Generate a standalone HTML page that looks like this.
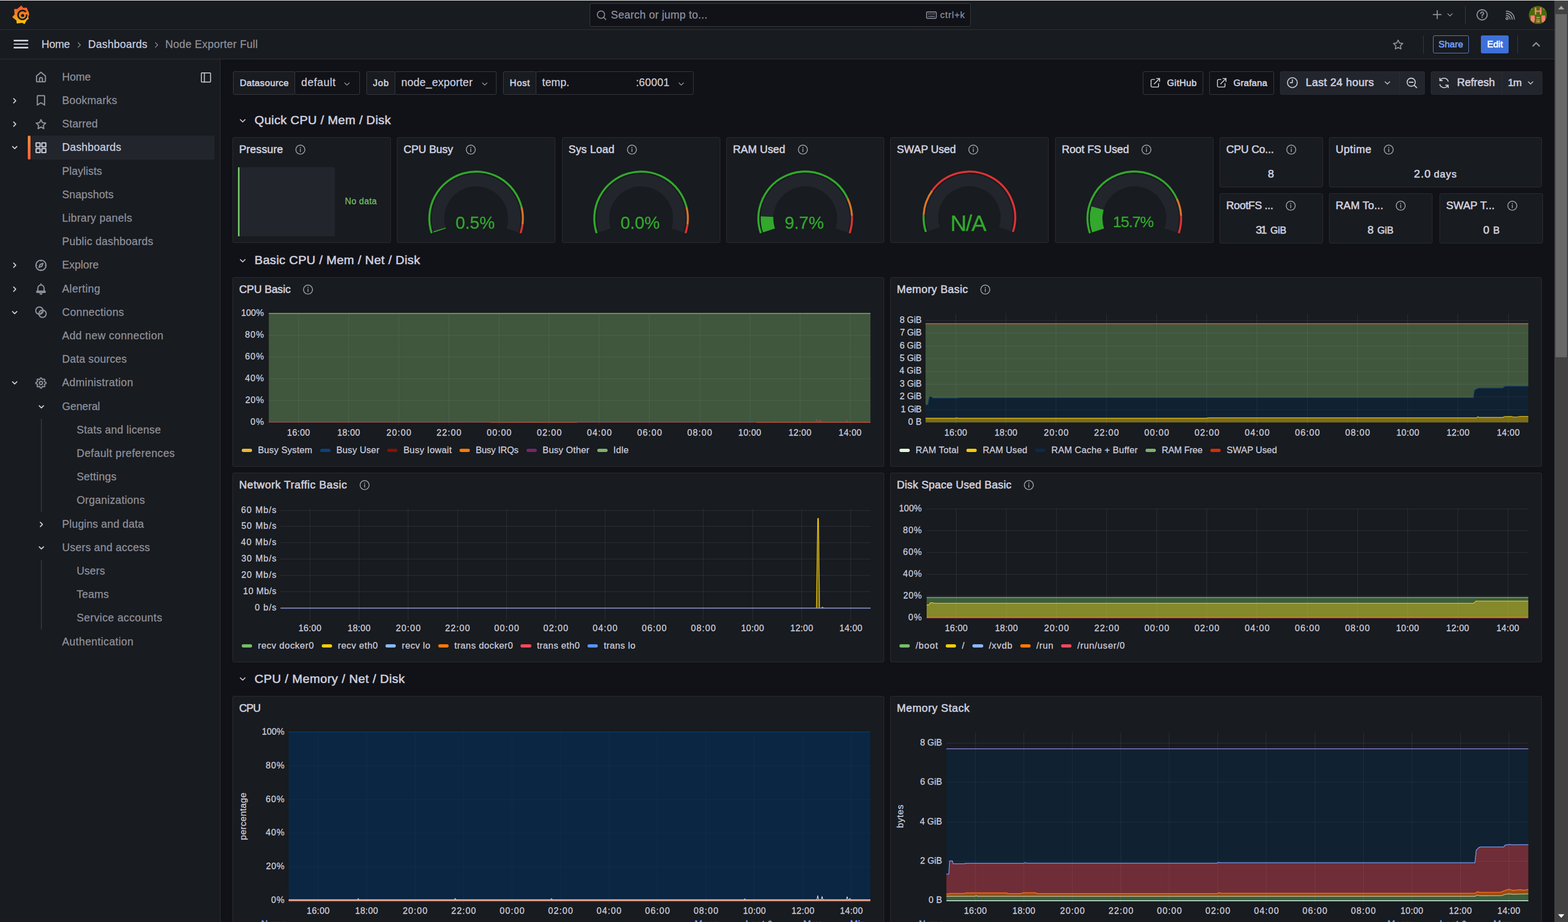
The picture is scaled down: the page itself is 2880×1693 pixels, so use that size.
<!DOCTYPE html>
<html lang="en"><head><meta charset="utf-8"><title>Node Exporter Full - Dashboards - Grafana</title><style>
html,body{margin:0;padding:0;background:#111217;}
body{width:2880px;height:1693px;overflow:hidden;font-family:"Liberation Sans", sans-serif;}
#root{position:relative;width:2880px;height:1693px;overflow:hidden;background:#111217;}
.t{position:absolute;white-space:pre;font-family:"Liberation Sans", sans-serif;}
.r{position:absolute;display:block;box-sizing:border-box;}
</style></head><body><div id="root">
<div class="r" style="left:0px;top:0px;width:2880px;height:55px;background:#181b1f;"></div><div class="r" style="left:0px;top:54px;width:2880px;height:1px;background:#2e3036;"></div><div class="r" style="left:0px;top:55px;width:2880px;height:54px;background:#181b1f;"></div><div class="r" style="left:0px;top:108px;width:2880px;height:1px;background:#2e3036;"></div><div class="r" style="left:0px;top:0px;width:2880px;height:1px;background:#f4f4f4;"></div><svg class="r" style="left:0px;top:0px;" width="70" height="55" viewBox="0 0 70 55"><defs><linearGradient id="lg" x1="0" y1="0" x2="0" y2="1"><stop offset="0" stop-color="#f05a28"/><stop offset=".5" stop-color="#f58220"/><stop offset="1" stop-color="#fbca0a"/></linearGradient></defs><path d="M39.2 11L42.3 15.4L48.6 14.9L50.2 19L52.4 23.6L52.5 27.4L51 30.4L51.9 34.4L48.6 36.4L44.8 43.2L41.2 41L31.4 42.2L31 37.2L23.6 31.3L27.6 26.8L26.8 17.2L32 17Z" fill="url(#lg)" stroke="url(#lg)" stroke-width="1.6" stroke-linejoin="round"/><path d="M47.62 22.01L46.89 21.32L46.08 20.72L45.22 20.22L44.3 19.83L43.34 19.54L42.36 19.38L41.37 19.33L40.38 19.4L39.41 19.59L38.47 19.88L37.57 20.29L36.73 20.8L35.96 21.4L35.27 22.09L34.66 22.85L34.15 23.68L33.74 24.56L33.44 25.48L33.26 26.43L33.18 27.39L33.22 28.35L33.37 29.3L33.64 30.22L34 31.1L34.47 31.93L35.04 32.7L35.68 33.39L36.41 34L37.2 34.52L38.04 34.94L38.92 35.25L39.84 35.46L40.77 35.56L41.7 35.55L42.62 35.43L43.52 35.2L44.39 34.87L45.2 34.44L45.96 33.91L46.65 33.31L47.26 32.62L47.79 31.87L48.22 31.07L48.55 30.22L48.78 29.34L48.9 28.44L48.92 27.54L48.83 26.64" fill="none" stroke="#181b1f" stroke-width="3.0" stroke-linecap="butt" stroke-linejoin="round"/><circle cx="41.5" cy="28.9" r="3.1" fill="#181b1f"/><path d="M39.6 30.2 A2.6 2.6 0 0 0 43.6 31" fill="none" stroke="#f7a55a" stroke-width="1"/></svg><div class="r" style="left:1083px;top:6px;width:700px;height:43px;background:#111217;border:1px solid #393b42;border-radius:3px;box-sizing:border-box;"></div><svg class="r" style="left:1094.45px;top:17.05px;" width="21.5" height="21.5" viewBox="0 0 24 24"><g fill="none" stroke="#8e8f9b" stroke-width="1.9" stroke-linecap="round" stroke-linejoin="round"><circle cx="11" cy="11" r="7.5"/><path d="M16.5 16.5L21 21"/></g></svg><span class="t" style="left:1122px;top:15px;font-size:19.75px;line-height:24px;color:#8e8f9b;letter-spacing:0.26px;-webkit-text-stroke:0.3px #8e8f9b;">Search or jump to...</span><svg class="r" style="left:1700.25px;top:16.95px;" width="21.5" height="21.5" viewBox="0 0 24 24"><g fill="none" stroke="#8e8f9b" stroke-width="1.8" stroke-linecap="round" stroke-linejoin="round"><rect x="2" y="5.5" width="20" height="13" rx="1.8"/><path d="M5.5 9.5h1M9 9.5h1M12.5 9.5h1M16 9.5h2.5M5.5 14.5h1M9 14.5h6.5M17.5 14.5h1" stroke-width="1.9"/></g></svg><span class="t" style="left:1726.8px;top:18px;font-size:16.75px;line-height:20px;color:#8e8f9b;letter-spacing:0.94px;-webkit-text-stroke:0.3px #8e8f9b;">ctrl+k</span><svg class="r" style="left:2629.25px;top:16.35px;" width="21.5" height="21.5" viewBox="0 0 24 24"><g fill="none" stroke="#8e8f9b" stroke-width="2.3" stroke-linecap="round" stroke-linejoin="round"><path d="M12 4v16M4 12h16"/></g></svg><svg class="r" style="left:2654.55px;top:19.15px;" width="16.5" height="16.5" viewBox="0 0 24 24"><g fill="none" stroke="#8e8f9b" stroke-width="2.3" stroke-linecap="round" stroke-linejoin="round"><path d="M6 9l6 6 6-6"/></g></svg><div class="r" style="left:2691px;top:11px;width:1px;height:33px;background:#393b42;"></div><svg class="r" style="left:2709.75px;top:14.75px;" width="24.5" height="24.5" viewBox="0 0 24 24"><g fill="none" stroke="#8e8f9b" stroke-width="2" stroke-linecap="round" stroke-linejoin="round"><circle cx="12" cy="12" r="9.2"/><path d="M9.6 9.5a2.5 2.5 0 1 1 3.6 2.2c-.8.5-1.2 1-1.2 2"/><path d="M12 16.2v.6"/></g></svg><svg class="r" style="left:2763px;top:17px;" width="22" height="22" viewBox="0 0 24 24"><g fill="none" stroke="#8e8f9b" stroke-width="2" stroke-linecap="round" stroke-linejoin="round"><circle cx="5.5" cy="18.5" r="2"/><path d="M4 12.5a7.5 7.5 0 0 1 7.5 7.5"/><path d="M4 8.2A11.8 11.8 0 0 1 15.8 20"/><path d="M4 3.8A16.2 16.2 0 0 1 20.2 20"/></g></svg><svg class="r" style="left:2807.8px;top:10.8px;" width="33.4" height="33.4" viewBox="0 0 33.4 33.4"><defs><clipPath id="avc"><circle cx="16.7" cy="16.7" r="16.7"/></clipPath></defs><g clip-path="url(#avc)"><rect width="34" height="34" fill="#4a6b0a"/><rect x="10.9" y="2.8" width="2.9" height="13" fill="#fb8072"/><rect x="20.3" y="2.8" width="3" height="13" fill="#fb8072"/><rect x="10.9" y="8.3" width="12.4" height="2.5" fill="#fb8072"/><rect x="3.4" y="17.4" width="7.5" height="10.4" fill="#fb8072"/><rect x="23.3" y="17.4" width="6.8" height="10.4" fill="#fb8072"/><rect x="6.2" y="27.8" width="3.7" height="2.4" fill="#fb8072"/><rect x="24" y="27.8" width="3.7" height="2.4" fill="#fb8072"/><rect x="13.8" y="20.3" width="6.5" height="2.1" fill="#fb8072"/><rect x="13.8" y="24.7" width="6.5" height="2" fill="#fb8072"/><rect x="13.8" y="27.8" width="6.5" height="2.3" fill="#fb8072"/><rect x="3.8" y="4.9" width="2.4" height="1.6" fill="#fb8072"/><rect x="26.5" y="4.9" width="3.2" height="1.6" fill="#fb8072"/></g></svg>
<div class="r" style="left:25px;top:73.05px;width:27px;height:2.7px;background:#ccccdc;border-radius:1px;"></div><div class="r" style="left:25px;top:79.75px;width:27px;height:2.7px;background:#ccccdc;border-radius:1px;"></div><div class="r" style="left:25px;top:86.45px;width:27px;height:2.7px;background:#ccccdc;border-radius:1px;"></div><span class="t" style="left:76.3px;top:69px;font-size:19.75px;line-height:24px;color:#ccccdc;letter-spacing:-0.13px;-webkit-text-stroke:0.3px #ccccdc;">Home</span><svg class="r" style="left:137px;top:73.5px;" width="17" height="17" viewBox="0 0 24 24"><g fill="none" stroke="#8e8f9b" stroke-width="2" stroke-linecap="round" stroke-linejoin="round"><path d="M9 6l6 6-6 6"/></g></svg><span class="t" style="left:161.7px;top:69px;font-size:19.75px;line-height:24px;color:#ccccdc;letter-spacing:0.28px;-webkit-text-stroke:0.3px #ccccdc;">Dashboards</span><svg class="r" style="left:279px;top:73.5px;" width="17" height="17" viewBox="0 0 24 24"><g fill="none" stroke="#8e8f9b" stroke-width="2" stroke-linecap="round" stroke-linejoin="round"><path d="M9 6l6 6-6 6"/></g></svg><span class="t" style="left:303.5px;top:69px;font-size:19.75px;line-height:24px;color:#8e8f9b;letter-spacing:0.31px;-webkit-text-stroke:0.3px #8e8f9b;">Node Exporter Full</span><svg class="r" style="left:2556px;top:69.5px;" width="24" height="24" viewBox="0 0 24 24"><g fill="none" stroke="#8e8f9b" stroke-width="1.9" stroke-linecap="round" stroke-linejoin="round"><path d="M12 3.6l2.6 5.4 5.9.8-4.3 4.1 1 5.9L12 17l-5.2 2.8 1-5.9-4.3-4.1 5.9-.8z"/></g></svg><div class="r" style="left:2614px;top:65px;width:1px;height:33px;background:#393b42;"></div><div class="r" style="left:2632px;top:65px;width:66px;height:33px;border:1px solid #5d83d6;border-radius:3px;box-sizing:border-box;"></div><span class="t" style="left:2642.2px;top:72px;font-size:16.75px;line-height:20px;color:#6e9fff;letter-spacing:0.08px;-webkit-text-stroke:0.7px #6e9fff;">Share</span><div class="r" style="left:2720px;top:65px;width:51px;height:33px;background:#3d71d9;border-radius:3px;"></div><span class="t" style="left:2731.5px;top:72px;font-size:16.75px;line-height:20px;color:#ffffff;letter-spacing:0.05px;-webkit-text-stroke:0.7px #ffffff;">Edit</span><div class="r" style="left:2787px;top:65px;width:1px;height:33px;background:#393b42;"></div><svg class="r" style="left:2809.5px;top:69.8px;" width="23" height="23" viewBox="0 0 24 24"><g fill="none" stroke="#8e8f9b" stroke-width="2.7" stroke-linecap="round" stroke-linejoin="round"><path d="M6 15l6-6 6 6"/></g></svg>
<div class="r" style="left:0px;top:109px;width:404px;height:1584px;background:#181b1f;"></div><div class="r" style="left:404px;top:109px;width:1px;height:1584px;background:#2e3036;"></div><svg class="r" style="left:62.85px;top:129.05px;" width="24.5" height="24.5" viewBox="0 0 24 24"><g fill="none" stroke="#8e8f9b" stroke-width="2.2" stroke-linecap="round" stroke-linejoin="round"><path d="M4 10.4 12 3.6l8 6.8V19a1.7 1.7 0 0 1-1.7 1.7H5.7A1.7 1.7 0 0 1 4 19z"/><path d="M9.4 20.6v-4.8a2.6 2.6 0 0 1 5.2 0v4.8"/></g></svg><span class="t" style="left:114px;top:129px;font-size:19.75px;line-height:24px;color:#8e8f9b;letter-spacing:0.01px;-webkit-text-stroke:0.3px #8e8f9b;">Home</span><svg class="r" style="left:62.85px;top:172.25px;" width="24.5" height="24.5" viewBox="0 0 24 24"><g fill="none" stroke="#8e8f9b" stroke-width="2.2" stroke-linecap="round" stroke-linejoin="round"><path d="M6.5 3.5h11a1 1 0 0 1 1 1v16l-6.5-4.2L5.5 20.5v-16a1 1 0 0 1 1-1z"/></g></svg><svg class="r" style="left:18.6px;top:177px;" width="16" height="16" viewBox="0 0 24 24"><g fill="none" stroke="#ccccdc" stroke-width="2.7" stroke-linecap="round" stroke-linejoin="round"><path d="M9 6l6 6-6 6"/></g></svg><span class="t" style="left:114px;top:172px;font-size:19.75px;line-height:24px;color:#8e8f9b;letter-spacing:0.28px;-webkit-text-stroke:0.3px #8e8f9b;">Bookmarks</span><svg class="r" style="left:62.85px;top:216.35px;" width="24.5" height="24.5" viewBox="0 0 24 24"><g fill="none" stroke="#8e8f9b" stroke-width="2.2" stroke-linecap="round" stroke-linejoin="round"><path d="M12 3.6l2.6 5.4 5.9.8-4.3 4.1 1 5.9L12 17l-5.2 2.8 1-5.9-4.3-4.1 5.9-.8z"/></g></svg><svg class="r" style="left:18.6px;top:220.2px;" width="16" height="16" viewBox="0 0 24 24"><g fill="none" stroke="#ccccdc" stroke-width="2.7" stroke-linecap="round" stroke-linejoin="round"><path d="M9 6l6 6-6 6"/></g></svg><span class="t" style="left:114px;top:215px;font-size:19.75px;line-height:24px;color:#8e8f9b;letter-spacing:0.14px;-webkit-text-stroke:0.3px #8e8f9b;">Starred</span><div class="r" style="left:51.5px;top:249.3px;width:342.5px;height:43.4px;background:#22252b;border-radius:3px;"></div><div class="r" style="left:51.3px;top:249.3px;width:5.2px;height:43.4px;border-radius:3px;background:linear-gradient(#ff8a33,#f55f3e);"></div><svg class="r" style="left:62.85px;top:258.65px;" width="24.5" height="24.5" viewBox="0 0 24 24"><g fill="none" stroke="#ccccdc" stroke-width="2.2" stroke-linecap="round" stroke-linejoin="round"><rect x="3.2" y="3.2" width="7.2" height="7.2" rx=".5"/><rect x="13.6" y="3.2" width="7.2" height="7.2" rx=".5"/><rect x="3.2" y="13.6" width="7.2" height="7.2" rx=".5"/><rect x="13.6" y="13.6" width="7.2" height="7.2" rx=".5"/></g></svg><svg class="r" style="left:18.6px;top:263.4px;" width="16" height="16" viewBox="0 0 24 24"><g fill="none" stroke="#ccccdc" stroke-width="2.7" stroke-linecap="round" stroke-linejoin="round"><path d="M6 9l6 6 6-6"/></g></svg><span class="t" style="left:114px;top:258px;font-size:19.75px;line-height:24px;color:#ccccdc;letter-spacing:0.23px;-webkit-text-stroke:0.3px #ccccdc;">Dashboards</span><span class="t" style="left:114px;top:302px;font-size:19.75px;line-height:24px;color:#8e8f9b;letter-spacing:0.13px;-webkit-text-stroke:0.3px #8e8f9b;">Playlists</span><span class="t" style="left:114px;top:345px;font-size:19.75px;line-height:24px;color:#8e8f9b;letter-spacing:0.15px;-webkit-text-stroke:0.3px #8e8f9b;">Snapshots</span><span class="t" style="left:114px;top:388px;font-size:19.75px;line-height:24px;color:#8e8f9b;letter-spacing:0.35px;-webkit-text-stroke:0.3px #8e8f9b;">Library panels</span><span class="t" style="left:114px;top:431px;font-size:19.75px;line-height:24px;color:#8e8f9b;letter-spacing:0.31px;-webkit-text-stroke:0.3px #8e8f9b;">Public dashboards</span><svg class="r" style="left:62.85px;top:474.65px;" width="24.5" height="24.5" viewBox="0 0 24 24"><g fill="none" stroke="#8e8f9b" stroke-width="2.2" stroke-linecap="round" stroke-linejoin="round"><circle cx="12" cy="12" r="9.2"/><path d="M15.6 8.4l-2 5.2-5.2 2 2-5.2z"/><path d="M12 3.4v1.4M12 19.2v1.4M3.4 12h1.4M19.2 12h1.4" stroke-width="1.3"/></g></svg><svg class="r" style="left:18.6px;top:479.4px;" width="16" height="16" viewBox="0 0 24 24"><g fill="none" stroke="#ccccdc" stroke-width="2.7" stroke-linecap="round" stroke-linejoin="round"><path d="M9 6l6 6-6 6"/></g></svg><span class="t" style="left:114px;top:474px;font-size:19.75px;line-height:24px;color:#8e8f9b;letter-spacing:0.06px;-webkit-text-stroke:0.3px #8e8f9b;">Explore</span><svg class="r" style="left:62.85px;top:517.85px;" width="24.5" height="24.5" viewBox="0 0 24 24"><g fill="none" stroke="#8e8f9b" stroke-width="2.2" stroke-linecap="round" stroke-linejoin="round"><path d="M6.4 16.2v-5.4a5.6 5.6 0 0 1 11.2 0v5.4"/><path d="M4.6 16.4h14.8v2.2H4.6z"/><path d="M12 3.2v1.8"/><path d="M10.4 20.8a1.8 1.8 0 0 0 3.2 0"/></g></svg><svg class="r" style="left:18.6px;top:522.6px;" width="16" height="16" viewBox="0 0 24 24"><g fill="none" stroke="#ccccdc" stroke-width="2.7" stroke-linecap="round" stroke-linejoin="round"><path d="M9 6l6 6-6 6"/></g></svg><span class="t" style="left:114px;top:518px;font-size:19.75px;line-height:24px;color:#8e8f9b;letter-spacing:0.43px;-webkit-text-stroke:0.3px #8e8f9b;">Alerting</span><svg class="r" style="left:62.85px;top:561.05px;" width="24.5" height="24.5" viewBox="0 0 24 24"><g fill="none" stroke="#8e8f9b" stroke-width="2.2" stroke-linecap="round" stroke-linejoin="round"><circle cx="9.2" cy="9.2" r="6.6"/><circle cx="14.8" cy="14.8" r="6.6"/><path d="M10.2 14.6l4.4-4.4M12 15.4l3.4-3.4M8.6 12l3.4-3.4" stroke-width="1.3"/></g></svg><svg class="r" style="left:18.6px;top:565.8px;" width="16" height="16" viewBox="0 0 24 24"><g fill="none" stroke="#ccccdc" stroke-width="2.7" stroke-linecap="round" stroke-linejoin="round"><path d="M6 9l6 6 6-6"/></g></svg><span class="t" style="left:114px;top:561px;font-size:19.75px;line-height:24px;color:#8e8f9b;letter-spacing:0.39px;-webkit-text-stroke:0.3px #8e8f9b;">Connections</span><span class="t" style="left:114px;top:604px;font-size:19.75px;line-height:24px;color:#8e8f9b;letter-spacing:0.47px;-webkit-text-stroke:0.3px #8e8f9b;">Add new connection</span><span class="t" style="left:114px;top:647px;font-size:19.75px;line-height:24px;color:#8e8f9b;letter-spacing:0.23px;-webkit-text-stroke:0.3px #8e8f9b;">Data sources</span><svg class="r" style="left:62.85px;top:690.65px;" width="24.5" height="24.5" viewBox="0 0 24 24"><g fill="none" stroke="#8e8f9b" stroke-width="2.2" stroke-linecap="round" stroke-linejoin="round"><g transform="translate(1.9 1.9) scale(.84)" stroke-width="2.5"><circle cx="12" cy="12" r="3.4"/><path d="M19.4 15a1.65 1.65 0 0 0 .33 1.82l.06.06a2 2 0 0 1 0 2.83 2 2 0 0 1-2.83 0l-.06-.06a1.65 1.65 0 0 0-1.82-.33 1.65 1.65 0 0 0-1 1.51V21a2 2 0 0 1-2 2 2 2 0 0 1-2-2v-.09A1.65 1.65 0 0 0 9 19.4a1.65 1.65 0 0 0-1.82.33l-.06.06a2 2 0 0 1-2.83 0 2 2 0 0 1 0-2.83l.06-.06a1.65 1.65 0 0 0 .33-1.82 1.65 1.65 0 0 0-1.51-1H3a2 2 0 0 1-2-2 2 2 0 0 1 2-2h.09A1.65 1.65 0 0 0 4.6 9a1.65 1.65 0 0 0-.33-1.82l-.06-.06a2 2 0 0 1 0-2.83 2 2 0 0 1 2.83 0l.06.06a1.65 1.65 0 0 0 1.82.33H9a1.65 1.65 0 0 0 1-1.51V3a2 2 0 0 1 2-2 2 2 0 0 1 2 2v.09a1.65 1.65 0 0 0 1 1.51 1.65 1.65 0 0 0 1.82-.33l.06-.06a2 2 0 0 1 2.83 0 2 2 0 0 1 0 2.83l-.06.06a1.65 1.65 0 0 0-.33 1.82V9a1.65 1.65 0 0 0 1.51 1H21a2 2 0 0 1 2 2 2 2 0 0 1-2 2h-.09a1.65 1.65 0 0 0-1.51 1z"/></g></g></svg><svg class="r" style="left:18.6px;top:695.4px;" width="16" height="16" viewBox="0 0 24 24"><g fill="none" stroke="#ccccdc" stroke-width="2.7" stroke-linecap="round" stroke-linejoin="round"><path d="M6 9l6 6 6-6"/></g></svg><span class="t" style="left:114px;top:690px;font-size:19.75px;line-height:24px;color:#8e8f9b;letter-spacing:0.41px;-webkit-text-stroke:0.3px #8e8f9b;">Administration</span><svg class="r" style="left:67.6px;top:738.6px;" width="16" height="16" viewBox="0 0 24 24"><g fill="none" stroke="#ccccdc" stroke-width="2.7" stroke-linecap="round" stroke-linejoin="round"><path d="M6 9l6 6 6-6"/></g></svg><span class="t" style="left:114px;top:734px;font-size:19.75px;line-height:24px;color:#8e8f9b;letter-spacing:-0.09px;-webkit-text-stroke:0.3px #8e8f9b;">General</span><span class="t" style="left:140.7px;top:777px;font-size:19.75px;line-height:24px;color:#8e8f9b;letter-spacing:0.27px;-webkit-text-stroke:0.3px #8e8f9b;">Stats and license</span><span class="t" style="left:140.7px;top:820px;font-size:19.75px;line-height:24px;color:#8e8f9b;letter-spacing:0.44px;-webkit-text-stroke:0.3px #8e8f9b;">Default preferences</span><span class="t" style="left:140.7px;top:863px;font-size:19.75px;line-height:24px;color:#8e8f9b;letter-spacing:0.26px;-webkit-text-stroke:0.3px #8e8f9b;">Settings</span><span class="t" style="left:140.7px;top:906px;font-size:19.75px;line-height:24px;color:#8e8f9b;letter-spacing:0.29px;-webkit-text-stroke:0.3px #8e8f9b;">Organizations</span><svg class="r" style="left:67.6px;top:954.6px;" width="16" height="16" viewBox="0 0 24 24"><g fill="none" stroke="#ccccdc" stroke-width="2.7" stroke-linecap="round" stroke-linejoin="round"><path d="M9 6l6 6-6 6"/></g></svg><span class="t" style="left:114px;top:950px;font-size:19.75px;line-height:24px;color:#8e8f9b;letter-spacing:0.2px;-webkit-text-stroke:0.3px #8e8f9b;">Plugins and data</span><svg class="r" style="left:67.6px;top:997.8px;" width="16" height="16" viewBox="0 0 24 24"><g fill="none" stroke="#ccccdc" stroke-width="2.7" stroke-linecap="round" stroke-linejoin="round"><path d="M6 9l6 6 6-6"/></g></svg><span class="t" style="left:114px;top:993px;font-size:19.75px;line-height:24px;color:#8e8f9b;letter-spacing:0.3px;-webkit-text-stroke:0.3px #8e8f9b;">Users and access</span><span class="t" style="left:140.7px;top:1036px;font-size:19.75px;line-height:24px;color:#8e8f9b;letter-spacing:0.13px;-webkit-text-stroke:0.3px #8e8f9b;">Users</span><span class="t" style="left:140.7px;top:1079px;font-size:19.75px;line-height:24px;color:#8e8f9b;letter-spacing:0.26px;-webkit-text-stroke:0.3px #8e8f9b;">Teams</span><span class="t" style="left:140.7px;top:1122px;font-size:19.75px;line-height:24px;color:#8e8f9b;letter-spacing:0.45px;-webkit-text-stroke:0.3px #8e8f9b;">Service accounts</span><span class="t" style="left:114px;top:1166px;font-size:19.75px;line-height:24px;color:#8e8f9b;letter-spacing:0.45px;-webkit-text-stroke:0.3px #8e8f9b;">Authentication</span><svg class="r" style="left:366.75px;top:130.55px;" width="22.5" height="22.5" viewBox="0 0 24 24"><g fill="none" stroke="#ccccdc" stroke-width="1.8" stroke-linecap="round" stroke-linejoin="round"><rect x="3" y="3" width="18" height="18" rx="1"/><path d="M9 3v18"/></g></svg><div class="r" style="left:75.4px;top:768.5px;width:1.7px;height:171px;background:#30333a;"></div><div class="r" style="left:75.4px;top:1027.5px;width:1.7px;height:128.5px;background:#30333a;"></div>
<div class="r" style="left:428px;top:131px;width:114px;height:43px;background:#181b1f;border:1px solid #393b42;border-radius:3px;"></div><span class="t" style="left:440.5px;top:143px;font-size:16.75px;line-height:20px;color:#ccccdc;letter-spacing:0.43px;-webkit-text-stroke:0.7px #ccccdc;">Datasource</span><div class="r" style="left:541px;top:131px;width:120px;height:43px;background:#111217;border:1px solid #393b42;border-radius:3px;"></div><span class="t" style="left:553.3px;top:139px;font-size:19.75px;line-height:24px;color:#ccccdc;letter-spacing:0.62px;-webkit-text-stroke:0.3px #ccccdc;">default</span><svg class="r" style="left:629.35px;top:145.55px;" width="16.5" height="16.5" viewBox="0 0 24 24"><g fill="none" stroke="#8e8f9b" stroke-width="2.3" stroke-linecap="round" stroke-linejoin="round"><path d="M6 9l6 6 6-6"/></g></svg><div class="r" style="left:673px;top:131px;width:53px;height:43px;background:#181b1f;border:1px solid #393b42;border-radius:3px;"></div><span class="t" style="left:684.9px;top:143px;font-size:16.75px;line-height:20px;color:#ccccdc;letter-spacing:0.9px;-webkit-text-stroke:0.7px #ccccdc;">Job</span><div class="r" style="left:725px;top:131px;width:187px;height:43px;background:#111217;border:1px solid #393b42;border-radius:3px;"></div><span class="t" style="left:737px;top:139px;font-size:19.75px;line-height:24px;color:#ccccdc;letter-spacing:0.3px;-webkit-text-stroke:0.3px #ccccdc;">node_exporter</span><svg class="r" style="left:881.55px;top:145.55px;" width="16.5" height="16.5" viewBox="0 0 24 24"><g fill="none" stroke="#8e8f9b" stroke-width="2.3" stroke-linecap="round" stroke-linejoin="round"><path d="M6 9l6 6 6-6"/></g></svg><div class="r" style="left:924px;top:131px;width:61px;height:43px;background:#181b1f;border:1px solid #393b42;border-radius:3px;"></div><span class="t" style="left:936.3px;top:143px;font-size:16.75px;line-height:20px;color:#ccccdc;letter-spacing:0.75px;-webkit-text-stroke:0.7px #ccccdc;">Host</span><div class="r" style="left:984px;top:131px;width:290px;height:43px;background:#111217;border:1px solid #393b42;border-radius:3px;"></div><span class="t" style="left:995.8px;top:139px;font-size:19.75px;line-height:24px;color:#ccccdc;letter-spacing:0.15px;-webkit-text-stroke:0.3px #ccccdc;">temp.</span><span class="t" style="left:1167.9px;top:139px;font-size:19.75px;line-height:24px;color:#ccccdc;letter-spacing:0.22px;-webkit-text-stroke:0.3px #ccccdc;">:60001</span><svg class="r" style="left:1242.65px;top:145.55px;" width="16.5" height="16.5" viewBox="0 0 24 24"><g fill="none" stroke="#8e8f9b" stroke-width="2.3" stroke-linecap="round" stroke-linejoin="round"><path d="M6 9l6 6 6-6"/></g></svg><div class="r" style="left:2099px;top:131px;width:111px;height:43px;background:#111217;border:1px solid #393b42;border-radius:3px;"></div><svg class="r" style="left:2110.8px;top:141px;" width="22" height="22" viewBox="0 0 24 24"><g fill="none" stroke="#ccccdc" stroke-width="1.8" stroke-linecap="round" stroke-linejoin="round"><path d="M18.5 13.5v5a2 2 0 0 1-2 2h-11a2 2 0 0 1-2-2v-11a2 2 0 0 1 2-2h5"/><path d="M14.5 3.5h6v6"/><path d="M20.5 3.5L10 14"/></g></svg><span class="t" style="left:2143.5px;top:143px;font-size:16.75px;line-height:20px;color:#ccccdc;letter-spacing:0.45px;-webkit-text-stroke:0.7px #ccccdc;">GitHub</span><div class="r" style="left:2221px;top:131px;width:119px;height:43px;background:#111217;border:1px solid #393b42;border-radius:3px;"></div><svg class="r" style="left:2232.9px;top:141px;" width="22" height="22" viewBox="0 0 24 24"><g fill="none" stroke="#ccccdc" stroke-width="1.8" stroke-linecap="round" stroke-linejoin="round"><path d="M18.5 13.5v5a2 2 0 0 1-2 2h-11a2 2 0 0 1-2-2v-11a2 2 0 0 1 2-2h5"/><path d="M14.5 3.5h6v6"/><path d="M20.5 3.5L10 14"/></g></svg><span class="t" style="left:2265.4px;top:143px;font-size:16.75px;line-height:20px;color:#ccccdc;letter-spacing:0.28px;-webkit-text-stroke:0.7px #ccccdc;">Grafana</span><div class="r" style="left:2351px;top:131px;width:220px;height:43px;background:#22252b;border:1px solid #2a2d33;border-radius:3px;border-radius:3px 0 0 3px;"></div><svg class="r" style="left:2362.25px;top:140.05px;" width="23.5" height="23.5" viewBox="0 0 24 24"><g fill="none" stroke="#ccccdc" stroke-width="1.8" stroke-linecap="round" stroke-linejoin="round"><circle cx="12" cy="12" r="9.2"/><path d="M12 6.5V12H8"/></g></svg><span class="t" style="left:2398.3px;top:139px;font-size:19.75px;line-height:24px;color:#ccccdc;letter-spacing:0.46px;-webkit-text-stroke:0.7px #ccccdc;">Last 24 hours</span><svg class="r" style="left:2539.65px;top:143.75px;" width="16.5" height="16.5" viewBox="0 0 24 24"><g fill="none" stroke="#ccccdc" stroke-width="2.3" stroke-linecap="round" stroke-linejoin="round"><path d="M6 9l6 6 6-6"/></g></svg><div class="r" style="left:2570px;top:131px;width:47px;height:43px;background:#22252b;border:1px solid #2a2d33;border-radius:3px;border-radius:0 3px 3px 0;"></div><svg class="r" style="left:2581.4px;top:140.4px;" width="24" height="24" viewBox="0 0 24 24"><g fill="none" stroke="#ccccdc" stroke-width="1.8" stroke-linecap="round" stroke-linejoin="round"><circle cx="11" cy="11" r="7.5"/><path d="M16.5 16.5L21 21"/><path d="M7.5 11h7"/></g></svg><div class="r" style="left:2628px;top:131px;width:131px;height:43px;background:#22252b;border:1px solid #2a2d33;border-radius:3px;border-radius:3px 0 0 3px;"></div><svg class="r" style="left:2639.75px;top:139.95px;" width="24.5" height="24.5" viewBox="0 0 24 24"><g fill="none" stroke="#ccccdc" stroke-width="1.8" stroke-linecap="round" stroke-linejoin="round"><path d="M19.5 9A8 8 0 0 0 5 7.5"/><path d="M4.5 3.5v4.3h4.3"/><path d="M4.5 15A8 8 0 0 0 19 16.5"/><path d="M19.5 20.5v-4.3h-4.3"/></g></svg><span class="t" style="left:2676.2px;top:139px;font-size:19.75px;line-height:24px;color:#ccccdc;letter-spacing:0.06px;-webkit-text-stroke:0.7px #ccccdc;">Refresh</span><div class="r" style="left:2758px;top:131px;width:75px;height:43px;background:#22252b;border:1px solid #2a2d33;border-radius:3px;border-radius:0 3px 3px 0;"></div><span class="t" style="left:2769.5px;top:140px;font-size:19px;line-height:23px;color:#ccccdc;letter-spacing:-0.9px;-webkit-text-stroke:0.7px #ccccdc;">1m</span><svg class="r" style="left:2802.75px;top:143.75px;" width="16.5" height="16.5" viewBox="0 0 24 24"><g fill="none" stroke="#ccccdc" stroke-width="2.3" stroke-linecap="round" stroke-linejoin="round"><path d="M6 9l6 6 6-6"/></g></svg><svg class="r" style="left:437.05px;top:212.75px;" width="17.5" height="17.5" viewBox="0 0 24 24"><g fill="none" stroke="#ccccdc" stroke-width="2.3" stroke-linecap="round" stroke-linejoin="round"><path d="M6 9l6 6 6-6"/></g></svg><span class="t" style="left:467.6px;top:207px;font-size:22.5px;line-height:27px;color:#ccccdc;letter-spacing:0.36px;-webkit-text-stroke:0.7px #ccccdc;">Quick CPU / Mem / Disk</span><svg class="r" style="left:437.05px;top:469.55px;" width="17.5" height="17.5" viewBox="0 0 24 24"><g fill="none" stroke="#ccccdc" stroke-width="2.3" stroke-linecap="round" stroke-linejoin="round"><path d="M6 9l6 6 6-6"/></g></svg><span class="t" style="left:467.6px;top:464px;font-size:22.5px;line-height:27px;color:#ccccdc;letter-spacing:0.37px;-webkit-text-stroke:0.7px #ccccdc;">Basic CPU / Mem / Net / Disk</span><svg class="r" style="left:437.05px;top:1238.45px;" width="17.5" height="17.5" viewBox="0 0 24 24"><g fill="none" stroke="#ccccdc" stroke-width="2.3" stroke-linecap="round" stroke-linejoin="round"><path d="M6 9l6 6 6-6"/></g></svg><span class="t" style="left:467.6px;top:1233px;font-size:22.5px;line-height:27px;color:#ccccdc;letter-spacing:0.49px;-webkit-text-stroke:0.7px #ccccdc;">CPU / Memory / Net / Disk</span>
<div class="r" style="left:427px;top:252px;width:291px;height:194px;background:#181b1f;border:1px solid #2a2d33;border-radius:3px;"></div><span class="t" style="left:439.2px;top:262px;font-size:19.75px;line-height:24px;color:#ccccdc;letter-spacing:0.21px;-webkit-text-stroke:0.7px #ccccdc;">Pressure</span><svg class="r" style="left:541.2px;top:264.2px;" width="21.4" height="21.4" viewBox="0 0 24 24"><g fill="none" stroke="#9a9ba8" stroke-width="1.9" stroke-linecap="round" stroke-linejoin="round"><circle cx="12" cy="12" r="9.3"/><path d="M12 11v5.2"/><path d="M12 7.4v.8"/></g></svg><div class="r" style="left:437px;top:307px;width:178px;height:127px;background:#22252b;border-radius:2px;"></div><div class="r" style="left:437px;top:307px;width:3px;height:127px;background:#73bf69;border-radius:1px;"></div><span class="t" style="left:633.4px;top:360px;font-size:16px;line-height:19px;color:#73bf69;letter-spacing:0.43px;-webkit-text-stroke:0.3px #73bf69;">No data</span><div class="r" style="left:729px;top:252px;width:291px;height:194px;background:#181b1f;border:1px solid #2a2d33;border-radius:3px;"></div><span class="t" style="left:741.2px;top:262px;font-size:19.75px;line-height:24px;color:#ccccdc;letter-spacing:-0.04px;-webkit-text-stroke:0.7px #ccccdc;">CPU Busy</span><svg class="r" style="left:853.5px;top:264.2px;" width="21.4" height="21.4" viewBox="0 0 24 24"><g fill="none" stroke="#9a9ba8" stroke-width="1.9" stroke-linecap="round" stroke-linejoin="round"><circle cx="12" cy="12" r="9.3"/><path d="M12 11v5.2"/><path d="M12 7.4v.8"/></g></svg><svg class="r" style="left:729px;top:252px;" width="291" height="194" viewBox="0 0 291 194"><path d="M78.86 171.17 A70.23 70.23 0 1 1 212.14 171.17" fill="none" stroke="#22252b" stroke-width="23.15"/><path d="M78.86 171.17 A70.23 70.23 0 0 1 78.31 169.41" fill="none" stroke="#32a82d" stroke-width="23.15"/><path d="M63.94 176.13 A85.95 85.95 0 1 1 228.85 128.03" fill="none" stroke="#32a82d" stroke-width="3.7"/><path d="M228.85 128.03 A85.95 85.95 0 0 1 230.7 160.31" fill="none" stroke="#d5752a" stroke-width="3.7"/><path d="M230.7 160.31 A85.95 85.95 0 0 1 227.06 176.13" fill="none" stroke="#de3333" stroke-width="3.7"/></svg><span class="t" style="left:836.69px;top:390px;font-size:31.5px;line-height:38px;color:#32a82d;letter-spacing:0.08px;-webkit-text-stroke:0.3px #32a82d;">0.5%</span><div class="r" style="left:1032px;top:252px;width:291px;height:194px;background:#181b1f;border:1px solid #2a2d33;border-radius:3px;"></div><span class="t" style="left:1044.2px;top:262px;font-size:19.75px;line-height:24px;color:#ccccdc;letter-spacing:0.28px;-webkit-text-stroke:0.7px #ccccdc;">Sys Load</span><svg class="r" style="left:1150px;top:264.2px;" width="21.4" height="21.4" viewBox="0 0 24 24"><g fill="none" stroke="#9a9ba8" stroke-width="1.9" stroke-linecap="round" stroke-linejoin="round"><circle cx="12" cy="12" r="9.3"/><path d="M12 11v5.2"/><path d="M12 7.4v.8"/></g></svg><svg class="r" style="left:1032px;top:252px;" width="291" height="194" viewBox="0 0 291 194"><path d="M78.86 171.17 A70.23 70.23 0 1 1 212.14 171.17" fill="none" stroke="#22252b" stroke-width="23.15"/><path d="M63.94 176.13 A85.95 85.95 0 1 1 228.85 128.03" fill="none" stroke="#32a82d" stroke-width="3.7"/><path d="M228.85 128.03 A85.95 85.95 0 0 1 230.7 160.31" fill="none" stroke="#d5752a" stroke-width="3.7"/><path d="M230.7 160.31 A85.95 85.95 0 0 1 227.06 176.13" fill="none" stroke="#de3333" stroke-width="3.7"/></svg><span class="t" style="left:1139.69px;top:390px;font-size:31.5px;line-height:38px;color:#32a82d;letter-spacing:0.08px;-webkit-text-stroke:0.3px #32a82d;">0.0%</span><div class="r" style="left:1334px;top:252px;width:290px;height:194px;background:#181b1f;border:1px solid #2a2d33;border-radius:3px;"></div><span class="t" style="left:1346.2px;top:262px;font-size:19.75px;line-height:24px;color:#ccccdc;letter-spacing:0.07px;-webkit-text-stroke:0.7px #ccccdc;">RAM Used</span><svg class="r" style="left:1463.7px;top:264.2px;" width="21.4" height="21.4" viewBox="0 0 24 24"><g fill="none" stroke="#9a9ba8" stroke-width="1.9" stroke-linecap="round" stroke-linejoin="round"><circle cx="12" cy="12" r="9.3"/><path d="M12 11v5.2"/><path d="M12 7.4v.8"/></g></svg><svg class="r" style="left:1334px;top:252px;" width="290" height="194" viewBox="0 0 290 194"><path d="M78.36 171.17 A70.23 70.23 0 1 1 211.64 171.17" fill="none" stroke="#22252b" stroke-width="23.15"/><path d="M78.36 171.17 A70.23 70.23 0 0 1 74.85 145.78" fill="none" stroke="#32a82d" stroke-width="23.15"/><path d="M63.44 176.13 A85.95 85.95 0 0 1 222.92 112.73" fill="none" stroke="#32a82d" stroke-width="3.7"/><path d="M222.92 112.73 A85.95 85.95 0 0 1 230.81 144.08" fill="none" stroke="#d5752a" stroke-width="3.7"/><path d="M230.81 144.08 A85.95 85.95 0 0 1 226.56 176.13" fill="none" stroke="#de3333" stroke-width="3.7"/></svg><span class="t" style="left:1441.19px;top:390px;font-size:31.5px;line-height:38px;color:#32a82d;letter-spacing:0.08px;-webkit-text-stroke:0.3px #32a82d;">9.7%</span><div class="r" style="left:1635px;top:252px;width:291px;height:194px;background:#181b1f;border:1px solid #2a2d33;border-radius:3px;"></div><span class="t" style="left:1647.2px;top:262px;font-size:19.75px;line-height:24px;color:#ccccdc;letter-spacing:-0.02px;-webkit-text-stroke:0.7px #ccccdc;">SWAP Used</span><svg class="r" style="left:1777.2px;top:264.2px;" width="21.4" height="21.4" viewBox="0 0 24 24"><g fill="none" stroke="#9a9ba8" stroke-width="1.9" stroke-linecap="round" stroke-linejoin="round"><circle cx="12" cy="12" r="9.3"/><path d="M12 11v5.2"/><path d="M12 7.4v.8"/></g></svg><svg class="r" style="left:1635px;top:252px;" width="291" height="194" viewBox="0 0 291 194"><path d="M80.33 168.98 A68.68 68.68 0 1 1 210.67 168.98" fill="none" stroke="#22252b" stroke-width="22.64"/><path d="M65.65 173.86 A84.15 84.15 0 0 1 61.49 142.49" fill="none" stroke="#32a82d" stroke-width="3.7"/><path d="M61.49 142.49 A84.15 84.15 0 0 1 77.25 98.08" fill="none" stroke="#d5752a" stroke-width="3.7"/><path d="M77.25 98.08 A84.15 84.15 0 0 1 225.35 173.86" fill="none" stroke="#de3333" stroke-width="3.7"/></svg><span class="t" style="left:1745.4px;top:385px;font-size:41.5px;line-height:50px;color:#32a82d;letter-spacing:-1.29px;-webkit-text-stroke:0.3px #32a82d;">N/A</span><div class="r" style="left:1938px;top:252px;width:291px;height:194px;background:#181b1f;border:1px solid #2a2d33;border-radius:3px;"></div><span class="t" style="left:1950.2px;top:262px;font-size:19.75px;line-height:24px;color:#ccccdc;letter-spacing:-0.05px;-webkit-text-stroke:0.7px #ccccdc;">Root FS Used</span><svg class="r" style="left:2095.2px;top:264.2px;" width="21.4" height="21.4" viewBox="0 0 24 24"><g fill="none" stroke="#9a9ba8" stroke-width="1.9" stroke-linecap="round" stroke-linejoin="round"><circle cx="12" cy="12" r="9.3"/><path d="M12 11v5.2"/><path d="M12 7.4v.8"/></g></svg><svg class="r" style="left:1938px;top:252px;" width="291" height="194" viewBox="0 0 291 194"><path d="M78.86 171.17 A70.23 70.23 0 1 1 212.14 171.17" fill="none" stroke="#22252b" stroke-width="23.15"/><path d="M78.86 171.17 A70.23 70.23 0 0 1 77.87 130.07" fill="none" stroke="#32a82d" stroke-width="23.15"/><path d="M63.94 176.13 A85.95 85.95 0 0 1 223.42 112.73" fill="none" stroke="#32a82d" stroke-width="3.7"/><path d="M223.42 112.73 A85.95 85.95 0 0 1 231.31 144.08" fill="none" stroke="#d5752a" stroke-width="3.7"/><path d="M231.31 144.08 A85.95 85.95 0 0 1 227.06 176.13" fill="none" stroke="#de3333" stroke-width="3.7"/></svg><span class="t" style="left:2044.1px;top:390px;font-size:28.5px;line-height:34px;color:#32a82d;letter-spacing:-1.4px;-webkit-text-stroke:0.3px #32a82d;">15.7%</span><div class="r" style="left:2240px;top:252px;width:190px;height:92px;background:#181b1f;border:1px solid #2a2d33;border-radius:3px;"></div><span class="t" style="left:2252.2px;top:262px;font-size:19.75px;line-height:24px;color:#ccccdc;letter-spacing:-0.17px;-webkit-text-stroke:0.7px #ccccdc;">CPU Co...</span><svg class="r" style="left:2361.2px;top:264.2px;" width="21.4" height="21.4" viewBox="0 0 24 24"><g fill="none" stroke="#9a9ba8" stroke-width="1.9" stroke-linecap="round" stroke-linejoin="round"><circle cx="12" cy="12" r="9.3"/><path d="M12 11v5.2"/><path d="M12 7.4v.8"/></g></svg><span class="t" style="left:2328.7px;top:307px;font-size:20.25px;line-height:24px;color:#ccccdc;-webkit-text-stroke:0.7px #ccccdc;">8</span><div class="r" style="left:2441px;top:252px;width:391px;height:92px;background:#181b1f;border:1px solid #2a2d33;border-radius:3px;"></div><span class="t" style="left:2453.2px;top:262px;font-size:19.75px;line-height:24px;color:#ccccdc;letter-spacing:0.59px;-webkit-text-stroke:0.7px #ccccdc;">Uptime</span><svg class="r" style="left:2540.2px;top:264.2px;" width="21.4" height="21.4" viewBox="0 0 24 24"><g fill="none" stroke="#9a9ba8" stroke-width="1.9" stroke-linecap="round" stroke-linejoin="round"><circle cx="12" cy="12" r="9.3"/><path d="M12 11v5.2"/><path d="M12 7.4v.8"/></g></svg><span class="t" style="left:2597px;top:307px;font-size:20.25px;line-height:24px;color:#ccccdc;letter-spacing:1.17px;-webkit-text-stroke:0.7px #ccccdc;">2.0</span><span class="t" style="left:2633.7px;top:309px;font-size:18px;line-height:22px;color:#ccccdc;letter-spacing:1.16px;-webkit-text-stroke:0.7px #ccccdc;">days</span><div class="r" style="left:2240px;top:355px;width:190px;height:92px;background:#181b1f;border:1px solid #2a2d33;border-radius:3px;"></div><span class="t" style="left:2252.2px;top:365px;font-size:19.75px;line-height:24px;color:#ccccdc;letter-spacing:-0.26px;-webkit-text-stroke:0.7px #ccccdc;">RootFS ...</span><svg class="r" style="left:2360.3px;top:367.2px;" width="21.4" height="21.4" viewBox="0 0 24 24"><g fill="none" stroke="#9a9ba8" stroke-width="1.9" stroke-linecap="round" stroke-linejoin="round"><circle cx="12" cy="12" r="9.3"/><path d="M12 11v5.2"/><path d="M12 7.4v.8"/></g></svg><span class="t" style="left:2306.5px;top:410px;font-size:20.25px;line-height:24px;color:#ccccdc;letter-spacing:-2.02px;-webkit-text-stroke:0.7px #ccccdc;">31</span><span class="t" style="left:2333.2px;top:412px;font-size:18px;line-height:22px;color:#ccccdc;letter-spacing:-0.25px;-webkit-text-stroke:0.7px #ccccdc;">GiB</span><div class="r" style="left:2441px;top:355px;width:190px;height:92px;background:#181b1f;border:1px solid #2a2d33;border-radius:3px;"></div><span class="t" style="left:2453.2px;top:365px;font-size:19.75px;line-height:24px;color:#ccccdc;letter-spacing:0.15px;-webkit-text-stroke:0.7px #ccccdc;">RAM To...</span><svg class="r" style="left:2562.2px;top:367.2px;" width="21.4" height="21.4" viewBox="0 0 24 24"><g fill="none" stroke="#9a9ba8" stroke-width="1.9" stroke-linecap="round" stroke-linejoin="round"><circle cx="12" cy="12" r="9.3"/><path d="M12 11v5.2"/><path d="M12 7.4v.8"/></g></svg><span class="t" style="left:2511.7px;top:410px;font-size:20.25px;line-height:24px;color:#ccccdc;-webkit-text-stroke:0.7px #ccccdc;">8</span><span class="t" style="left:2529.7px;top:412px;font-size:18px;line-height:22px;color:#ccccdc;letter-spacing:-0.1px;-webkit-text-stroke:0.7px #ccccdc;">GiB</span><div class="r" style="left:2644px;top:355px;width:190px;height:92px;background:#181b1f;border:1px solid #2a2d33;border-radius:3px;"></div><span class="t" style="left:2656.2px;top:365px;font-size:19.75px;line-height:24px;color:#ccccdc;letter-spacing:0.06px;-webkit-text-stroke:0.7px #ccccdc;">SWAP T...</span><svg class="r" style="left:2766.7px;top:367.2px;" width="21.4" height="21.4" viewBox="0 0 24 24"><g fill="none" stroke="#9a9ba8" stroke-width="1.9" stroke-linecap="round" stroke-linejoin="round"><circle cx="12" cy="12" r="9.3"/><path d="M12 11v5.2"/><path d="M12 7.4v.8"/></g></svg><span class="t" style="left:2724.25px;top:410px;font-size:20.25px;line-height:24px;color:#ccccdc;-webkit-text-stroke:0.7px #ccccdc;">0</span><span class="t" style="left:2742.55px;top:412px;font-size:18px;line-height:22px;color:#ccccdc;-webkit-text-stroke:0.7px #ccccdc;">B</span>
<div class="r" style="left:427px;top:509px;width:1197px;height:348px;background:#181b1f;border:1px solid #2a2d33;border-radius:3px;"></div><span class="t" style="left:439.2px;top:519px;font-size:19.75px;line-height:24px;color:#ccccdc;letter-spacing:-0.11px;-webkit-text-stroke:0.7px #ccccdc;">CPU Basic</span><svg class="r" style="left:555.3px;top:521.2px;" width="21.4" height="21.4" viewBox="0 0 24 24"><g fill="none" stroke="#9a9ba8" stroke-width="1.9" stroke-linecap="round" stroke-linejoin="round"><circle cx="12" cy="12" r="9.3"/><path d="M12 11v5.2"/><path d="M12 7.4v.8"/></g></svg><svg class="r" style="left:427px;top:509px;" width="1197" height="348" viewBox="427 509 1197 348"><path d="M548.5 575.4L548.5 780.4" stroke="rgba(240,250,255,0.09)" stroke-width="1" fill="none"/><path d="M640.5 575.4L640.5 780.4" stroke="rgba(240,250,255,0.09)" stroke-width="1" fill="none"/><path d="M732.5 575.4L732.5 780.4" stroke="rgba(240,250,255,0.09)" stroke-width="1" fill="none"/><path d="M824.5 575.4L824.5 780.4" stroke="rgba(240,250,255,0.09)" stroke-width="1" fill="none"/><path d="M916.5 575.4L916.5 780.4" stroke="rgba(240,250,255,0.09)" stroke-width="1" fill="none"/><path d="M1008.5 575.4L1008.5 780.4" stroke="rgba(240,250,255,0.09)" stroke-width="1" fill="none"/><path d="M1100.5 575.4L1100.5 780.4" stroke="rgba(240,250,255,0.09)" stroke-width="1" fill="none"/><path d="M1192.5 575.4L1192.5 780.4" stroke="rgba(240,250,255,0.09)" stroke-width="1" fill="none"/><path d="M1285.5 575.4L1285.5 780.4" stroke="rgba(240,250,255,0.09)" stroke-width="1" fill="none"/><path d="M1377.5 575.4L1377.5 780.4" stroke="rgba(240,250,255,0.09)" stroke-width="1" fill="none"/><path d="M1469.5 575.4L1469.5 780.4" stroke="rgba(240,250,255,0.09)" stroke-width="1" fill="none"/><path d="M1561.5 575.4L1561.5 780.4" stroke="rgba(240,250,255,0.09)" stroke-width="1" fill="none"/><path d="M493.7 575.5L1598.8 575.5" stroke="rgba(240,250,255,0.09)" stroke-width="1" fill="none"/><path d="M493.7 615.5L1598.8 615.5" stroke="rgba(240,250,255,0.09)" stroke-width="1" fill="none"/><path d="M493.7 655.5L1598.8 655.5" stroke="rgba(240,250,255,0.09)" stroke-width="1" fill="none"/><path d="M493.7 695.5L1598.8 695.5" stroke="rgba(240,250,255,0.09)" stroke-width="1" fill="none"/><path d="M493.7 735.5L1598.8 735.5" stroke="rgba(240,250,255,0.09)" stroke-width="1" fill="none"/><path d="M493.7 775.5L1598.8 775.5" stroke="rgba(240,250,255,0.09)" stroke-width="1" fill="none"/><path d="M493.7 575.4L1598.8 575.4L1598.8 775.4L493.7 775.4Z" fill="#7EB26D" fill-opacity="0.4"/><path d="M493.7 575.4L1598.8 575.4" fill="none" stroke="#84b573" stroke-width="1.5" stroke-linejoin="round"/><path d="M493.7 775.2L503.68 775.2L504.88 774.89L506.08 775.2L520.1 775.2L521.3 774.95L522.5 775.2L534.67 775.2L535.87 774.74L537.07 775.2L541.6 775.2L542.8 774.64L544 775.2L548.2 775.2L549.4 774.7L550.6 775.2L555.32 775.2L556.52 774.94L557.72 775.2L568.11 775.2L569.31 774.42L570.51 775.2L576.09 775.2L577.29 774.84L578.49 775.2L592.13 775.2L593.33 774.34L594.53 775.2L607.36 775.2L608.56 774.72L609.76 775.2L628.98 775.2L630.18 774.97L631.38 775.2L648.72 775.2L649.92 774.8L651.12 775.2L657.03 775.2L658.23 774.92L659.43 775.2L667.96 775.2L669.16 774.43L670.36 775.2L676.85 775.2L678.05 774.59L679.25 775.2L693.08 775.2L694.28 774.74L695.48 775.2L707.84 775.2L709.04 774.96L710.24 775.2L714.79 775.2L715.99 774.86L717.19 775.2L731.68 775.2L732.88 774.7L734.08 775.2L742.71 775.2L743.91 774.59L745.11 775.2L755.96 775.2L757.16 774.79L758.36 775.2L774.67 775.2L775.87 774.51L777.07 775.2L784.57 775.2L785.77 774.6L786.97 775.2L798.98 775.2L800.18 774.39L801.38 775.2L816.65 775.2L817.85 774.8L819.05 775.2L838.33 775.2L839.53 774.92L840.73 775.2L851.02 775.2L852.22 774.47L853.42 775.2L859.45 775.2L860.65 774.66L861.85 775.2L866.08 775.2L867.28 774.53L868.48 775.2L884.31 775.2L885.51 774.6L886.71 775.2L904.32 775.2L905.52 774.78L906.72 775.2L921.44 775.2L922.64 774.58L923.84 775.2L936.72 775.2L937.92 774.68L939.12 775.2L956.16 775.2L957.36 774.34L958.56 775.2L969.75 775.2L970.95 774.54L972.15 775.2L976.72 775.2L977.92 774.51L979.12 775.2L993.07 775.2L994.27 774.3L995.47 775.2L1012.22 775.2L1013.42 774.8L1014.62 775.2L1024.4 775.2L1025.6 774.53L1026.8 775.2L1030.76 775.2L1031.96 774.68L1033.16 775.2L1039.45 775.2L1040.65 774.92L1041.85 775.2L1046.39 775.2L1047.59 774.46L1048.79 775.2L1054.46 775.2L1055.66 774.83L1056.86 775.2L1066.71 775.2L1067.91 774.39L1069.11 775.2L1074 775.2L1075.2 774.69L1076.4 775.2L1088.79 775.2L1089.99 774.38L1091.19 775.2L1107.9 775.2L1109.1 774.4L1110.3 775.2L1118.36 775.2L1119.56 774.71L1120.76 775.2L1130.1 775.2L1131.3 774.38L1132.5 775.2L1151.42 775.2L1152.62 774.89L1153.82 775.2L1160.24 775.2L1161.44 774.84L1162.64 775.2L1169.97 775.2L1171.17 774.66L1172.37 775.2L1185.4 775.2L1186.6 774.82L1187.8 775.2L1191.46 775.2L1192.66 774.71L1193.86 775.2L1203.37 775.2L1204.57 774.6L1205.77 775.2L1224.62 775.2L1225.82 774.52L1227.02 775.2L1238.87 775.2L1240.07 774.57L1241.27 775.2L1255.69 775.2L1256.89 774.96L1258.09 775.2L1276.08 775.2L1277.28 774.45L1278.48 775.2L1296.07 775.2L1297.27 774.44L1298.47 775.2L1308.35 775.2L1309.55 774.72L1310.75 775.2L1316.01 775.2L1317.21 774.56L1318.41 775.2L1323.01 775.2L1324.21 774.95L1325.41 775.2L1332.35 775.2L1333.55 774.89L1334.75 775.2L1343.79 775.2L1344.99 774.96L1346.19 775.2L1349.79 775.2L1350.99 774.89L1352.19 775.2L1357.41 775.2L1358.61 774.75L1359.81 775.2L1363.82 775.2L1365.02 774.39L1366.22 775.2L1379.65 775.2L1380.85 774.9L1382.05 775.2L1389.68 775.2L1390.88 774.76L1392.08 775.2L1401.51 775.2L1402.71 774.91L1403.91 775.2L1421.09 775.2L1422.29 774.3L1423.49 775.2L1434.55 775.2L1435.75 774.66L1436.95 775.2L1441.92 775.2L1443.12 774.93L1444.32 775.2L1453.4 775.2L1454.6 774.81L1455.8 775.2L1472.67 775.2L1473.87 774.89L1475.07 775.2L1479.04 775.2L1480.24 774.33L1481.44 775.2L1493.49 775.2L1494.69 774.9L1495.89 775.2L1498.4 775.2L1500.6 770.2L1502.8 775.2L1504.5 775.2L1506.7 770.9L1508.18 775.2L1508.9 775.2L1509.38 774.98L1510.58 775.2L1522.63 775.2L1523.83 774.32L1525.03 775.2L1542.44 775.2L1543.64 774.51L1544.84 775.2L1552.62 775.2L1553.1 775.2L1553.82 774.74L1555.02 775.2L1555.3 771.6L1557.5 775.2L1561.29 775.2L1562.49 774.46L1563.69 775.2L1575.81 775.2L1577.01 774.45L1578.21 775.2L1587.09 775.2L1588.29 774.84L1589.49 775.2L1598.8 775.2" fill="none" stroke="#8f4a52" stroke-width="1.5" stroke-linejoin="round"/><path d="M1390 775.6L1598.8 775.6" stroke="#c8553a" stroke-width="1.2" fill="none"/><path d="M900 775.7L1060 775.7" stroke="#c05a40" stroke-width="1" fill="none"/></svg><span class="t" style="left:527.3px;top:784px;font-size:16.25px;line-height:20px;color:#ccccdc;letter-spacing:0.33px;-webkit-text-stroke:0.3px #ccccdc;">16:00</span><span class="t" style="left:619.39px;top:784px;font-size:16.25px;line-height:20px;color:#ccccdc;letter-spacing:0.33px;-webkit-text-stroke:0.3px #ccccdc;">18:00</span><span class="t" style="left:709.73px;top:784px;font-size:16.25px;line-height:20px;color:#ccccdc;letter-spacing:1.21px;-webkit-text-stroke:0.3px #ccccdc;">20:00</span><span class="t" style="left:801.82px;top:784px;font-size:16.25px;line-height:20px;color:#ccccdc;letter-spacing:1.21px;-webkit-text-stroke:0.3px #ccccdc;">22:00</span><span class="t" style="left:893.92px;top:784px;font-size:16.25px;line-height:20px;color:#ccccdc;letter-spacing:1.21px;-webkit-text-stroke:0.3px #ccccdc;">00:00</span><span class="t" style="left:986.01px;top:784px;font-size:16.25px;line-height:20px;color:#ccccdc;letter-spacing:1.21px;-webkit-text-stroke:0.3px #ccccdc;">02:00</span><span class="t" style="left:1078.1px;top:784px;font-size:16.25px;line-height:20px;color:#ccccdc;letter-spacing:1.21px;-webkit-text-stroke:0.3px #ccccdc;">04:00</span><span class="t" style="left:1170.19px;top:784px;font-size:16.25px;line-height:20px;color:#ccccdc;letter-spacing:1.21px;-webkit-text-stroke:0.3px #ccccdc;">06:00</span><span class="t" style="left:1262.28px;top:784px;font-size:16.25px;line-height:20px;color:#ccccdc;letter-spacing:1.21px;-webkit-text-stroke:0.3px #ccccdc;">08:00</span><span class="t" style="left:1356.12px;top:784px;font-size:16.25px;line-height:20px;color:#ccccdc;letter-spacing:0.33px;-webkit-text-stroke:0.3px #ccccdc;">10:00</span><span class="t" style="left:1448.22px;top:784px;font-size:16.25px;line-height:20px;color:#ccccdc;letter-spacing:0.33px;-webkit-text-stroke:0.3px #ccccdc;">12:00</span><span class="t" style="left:1540.31px;top:784px;font-size:16.25px;line-height:20px;color:#ccccdc;letter-spacing:0.33px;-webkit-text-stroke:0.3px #ccccdc;">14:00</span><span class="t" style="left:443px;top:564px;font-size:16.25px;line-height:20px;color:#ccccdc;letter-spacing:0.01px;-webkit-text-stroke:0.3px #ccccdc;">100%</span><span class="t" style="left:450.1px;top:604px;font-size:16.25px;line-height:20px;color:#ccccdc;letter-spacing:0.99px;-webkit-text-stroke:0.3px #ccccdc;">80%</span><span class="t" style="left:450.1px;top:644px;font-size:16.25px;line-height:20px;color:#ccccdc;letter-spacing:0.99px;-webkit-text-stroke:0.3px #ccccdc;">60%</span><span class="t" style="left:450.1px;top:684px;font-size:16.25px;line-height:20px;color:#ccccdc;letter-spacing:0.99px;-webkit-text-stroke:0.3px #ccccdc;">40%</span><span class="t" style="left:450.6px;top:724px;font-size:16.25px;line-height:20px;color:#ccccdc;letter-spacing:0.74px;-webkit-text-stroke:0.3px #ccccdc;">20%</span><span class="t" style="left:460px;top:764px;font-size:16.25px;line-height:20px;color:#ccccdc;letter-spacing:1.11px;-webkit-text-stroke:0.3px #ccccdc;">0%</span><div class="r" style="left:443.7px;top:823.6px;width:19.4px;height:6.2px;background:#EAB839;border-radius:3.1px;"></div><span class="t" style="left:473.7px;top:817px;font-size:16.75px;line-height:20px;color:#ccccdc;letter-spacing:0.21px;-webkit-text-stroke:0.3px #ccccdc;">Busy System</span><div class="r" style="left:587.7px;top:823.6px;width:19.4px;height:6.2px;background:#0A437C;border-radius:3.1px;"></div><span class="t" style="left:617.7px;top:817px;font-size:16.75px;line-height:20px;color:#ccccdc;letter-spacing:0.22px;-webkit-text-stroke:0.3px #ccccdc;">Busy User</span><div class="r" style="left:710.9px;top:823.6px;width:19.4px;height:6.2px;background:#890F02;border-radius:3.1px;"></div><span class="t" style="left:740.9px;top:817px;font-size:16.75px;line-height:20px;color:#ccccdc;letter-spacing:0.3px;-webkit-text-stroke:0.3px #ccccdc;">Busy Iowait</span><div class="r" style="left:843.7px;top:823.6px;width:19.4px;height:6.2px;background:#FF780A;border-radius:3.1px;"></div><span class="t" style="left:873.7px;top:817px;font-size:16.75px;line-height:20px;color:#ccccdc;letter-spacing:-0.17px;-webkit-text-stroke:0.3px #ccccdc;">Busy IRQs</span><div class="r" style="left:966.6px;top:823.6px;width:19.4px;height:6.2px;background:#75256a;border-radius:3.1px;"></div><span class="t" style="left:996.6px;top:817px;font-size:16.75px;line-height:20px;color:#ccccdc;letter-spacing:0.22px;-webkit-text-stroke:0.3px #ccccdc;">Busy Other</span><div class="r" style="left:1096.6px;top:823.6px;width:19.4px;height:6.2px;background:#7EB26D;border-radius:3.1px;"></div><span class="t" style="left:1126.6px;top:817px;font-size:16.75px;line-height:20px;color:#ccccdc;letter-spacing:0.33px;-webkit-text-stroke:0.3px #ccccdc;">Idle</span><div class="r" style="left:1635px;top:509px;width:1197px;height:348px;background:#181b1f;border:1px solid #2a2d33;border-radius:3px;"></div><span class="t" style="left:1647.2px;top:519px;font-size:19.75px;line-height:24px;color:#ccccdc;letter-spacing:0.49px;-webkit-text-stroke:0.7px #ccccdc;">Memory Basic</span><svg class="r" style="left:1799.2px;top:521.2px;" width="21.4" height="21.4" viewBox="0 0 24 24"><g fill="none" stroke="#9a9ba8" stroke-width="1.9" stroke-linecap="round" stroke-linejoin="round"><circle cx="12" cy="12" r="9.3"/><path d="M12 11v5.2"/><path d="M12 7.4v.8"/></g></svg><svg class="r" style="left:1635px;top:509px;" width="1197" height="348" viewBox="1635 509 1197 348"><path d="M1755.5 575.7L1755.5 780.4" stroke="rgba(240,250,255,0.09)" stroke-width="1" fill="none"/><path d="M1847.5 575.7L1847.5 780.4" stroke="rgba(240,250,255,0.09)" stroke-width="1" fill="none"/><path d="M1939.5 575.7L1939.5 780.4" stroke="rgba(240,250,255,0.09)" stroke-width="1" fill="none"/><path d="M2032.5 575.7L2032.5 780.4" stroke="rgba(240,250,255,0.09)" stroke-width="1" fill="none"/><path d="M2124.5 575.7L2124.5 780.4" stroke="rgba(240,250,255,0.09)" stroke-width="1" fill="none"/><path d="M2216.5 575.7L2216.5 780.4" stroke="rgba(240,250,255,0.09)" stroke-width="1" fill="none"/><path d="M2308.5 575.7L2308.5 780.4" stroke="rgba(240,250,255,0.09)" stroke-width="1" fill="none"/><path d="M2401.5 575.7L2401.5 780.4" stroke="rgba(240,250,255,0.09)" stroke-width="1" fill="none"/><path d="M2493.5 575.7L2493.5 780.4" stroke="rgba(240,250,255,0.09)" stroke-width="1" fill="none"/><path d="M2585.5 575.7L2585.5 780.4" stroke="rgba(240,250,255,0.09)" stroke-width="1" fill="none"/><path d="M2677.5 575.7L2677.5 780.4" stroke="rgba(240,250,255,0.09)" stroke-width="1" fill="none"/><path d="M2770.5 575.7L2770.5 780.4" stroke="rgba(240,250,255,0.09)" stroke-width="1" fill="none"/><path d="M1700 588.5L2807.1 588.5" stroke="rgba(240,250,255,0.09)" stroke-width="1" fill="none"/><path d="M1700 611.5L2807.1 611.5" stroke="rgba(240,250,255,0.09)" stroke-width="1" fill="none"/><path d="M1700 635.5L2807.1 635.5" stroke="rgba(240,250,255,0.09)" stroke-width="1" fill="none"/><path d="M1700 658.5L2807.1 658.5" stroke="rgba(240,250,255,0.09)" stroke-width="1" fill="none"/><path d="M1700 682.5L2807.1 682.5" stroke="rgba(240,250,255,0.09)" stroke-width="1" fill="none"/><path d="M1700 705.5L2807.1 705.5" stroke="rgba(240,250,255,0.09)" stroke-width="1" fill="none"/><path d="M1700 728.5L2807.1 728.5" stroke="rgba(240,250,255,0.09)" stroke-width="1" fill="none"/><path d="M1700 752.5L2807.1 752.5" stroke="rgba(240,250,255,0.09)" stroke-width="1" fill="none"/><path d="M1700 775.5L2807.1 775.5" stroke="rgba(240,250,255,0.09)" stroke-width="1" fill="none"/><path d="M1700 594.4L2807.1 594.4L2807.1 709.3L2768 709.3L2763 710.2L2760 712.8L2716 712.8L2712 714.5L2708.5 716.5L2706.5 730.3L1762 730.3L1760 731.2L1713.5 731.2L1711.5 728.8L1707 728.8L1704.5 743.3L1700 743.3Z" fill="#7EB26D" fill-opacity="0.4"/><path d="M1700 743.3L1704.5 743.3L1707 728.8L1711.5 728.8L1713.5 731.2L1760 731.2L1762 730.3L2706.5 730.3L2708.5 716.5L2712 714.5L2716 712.8L2760 712.8L2763 710.2L2768 709.3L2807.1 709.3L2807.1 764.6L2792 764.6L2788 765.4L2780 765.6L2775 764.6L2764 764.9L2760 766.5L2717 766.5L2714.5 765.2L2712 767.3L2219 767.3L2216 768L1760 768L1757 767.2L1755 768L1700 768Z" fill="#052B51" fill-opacity="0.4"/><path d="M1700 768L1755 768L1757 767.2L1760 768L2216 768L2219 767.3L2712 767.3L2714.5 765.2L2717 766.5L2760 766.5L2764 764.9L2775 764.6L2780 765.6L2788 765.4L2792 764.6L2807.1 764.6L2807.1 775.4L1700 775.4Z" fill="#F2CC0C" fill-opacity="0.46"/><path d="M1700 743.3L1704.5 743.3L1707 728.8L1711.5 728.8L1713.5 731.2L1760 731.2L1762 730.3L2706.5 730.3L2708.5 716.5L2712 714.5L2716 712.8L2760 712.8L2763 710.2L2768 709.3L2807.1 709.3" fill="none" stroke="#12395f" stroke-width="1.3" stroke-linejoin="round"/><path d="M1700 768L1755 768L1757 767.2L1760 768L2216 768L2219 767.3L2712 767.3L2714.5 765.2L2717 766.5L2760 766.5L2764 764.9L2775 764.6L2780 765.6L2788 765.4L2792 764.6L2807.1 764.6" fill="none" stroke="#d9b91c" stroke-width="1.4" stroke-linejoin="round"/><path d="M1700 594.4L2807.1 594.4" fill="none" stroke="#cf5b3a" stroke-width="1.6" stroke-linejoin="round"/></svg><span class="t" style="left:1734.4px;top:784px;font-size:16.25px;line-height:20px;color:#ccccdc;letter-spacing:0.33px;-webkit-text-stroke:0.3px #ccccdc;">16:00</span><span class="t" style="left:1826.66px;top:784px;font-size:16.25px;line-height:20px;color:#ccccdc;letter-spacing:0.33px;-webkit-text-stroke:0.3px #ccccdc;">18:00</span><span class="t" style="left:1917.17px;top:784px;font-size:16.25px;line-height:20px;color:#ccccdc;letter-spacing:1.21px;-webkit-text-stroke:0.3px #ccccdc;">20:00</span><span class="t" style="left:2009.43px;top:784px;font-size:16.25px;line-height:20px;color:#ccccdc;letter-spacing:1.21px;-webkit-text-stroke:0.3px #ccccdc;">22:00</span><span class="t" style="left:2101.68px;top:784px;font-size:16.25px;line-height:20px;color:#ccccdc;letter-spacing:1.21px;-webkit-text-stroke:0.3px #ccccdc;">00:00</span><span class="t" style="left:2193.94px;top:784px;font-size:16.25px;line-height:20px;color:#ccccdc;letter-spacing:1.21px;-webkit-text-stroke:0.3px #ccccdc;">02:00</span><span class="t" style="left:2286.2px;top:784px;font-size:16.25px;line-height:20px;color:#ccccdc;letter-spacing:1.21px;-webkit-text-stroke:0.3px #ccccdc;">04:00</span><span class="t" style="left:2378.46px;top:784px;font-size:16.25px;line-height:20px;color:#ccccdc;letter-spacing:1.21px;-webkit-text-stroke:0.3px #ccccdc;">06:00</span><span class="t" style="left:2470.72px;top:784px;font-size:16.25px;line-height:20px;color:#ccccdc;letter-spacing:1.21px;-webkit-text-stroke:0.3px #ccccdc;">08:00</span><span class="t" style="left:2564.72px;top:784px;font-size:16.25px;line-height:20px;color:#ccccdc;letter-spacing:0.33px;-webkit-text-stroke:0.3px #ccccdc;">10:00</span><span class="t" style="left:2656.98px;top:784px;font-size:16.25px;line-height:20px;color:#ccccdc;letter-spacing:0.33px;-webkit-text-stroke:0.3px #ccccdc;">12:00</span><span class="t" style="left:2749.24px;top:784px;font-size:16.25px;line-height:20px;color:#ccccdc;letter-spacing:0.33px;-webkit-text-stroke:0.3px #ccccdc;">14:00</span><span class="t" style="left:1652.4px;top:577px;font-size:16.25px;line-height:20px;color:#ccccdc;letter-spacing:-0.04px;-webkit-text-stroke:0.3px #ccccdc;">8 GiB</span><span class="t" style="left:1652.9px;top:600px;font-size:16.25px;line-height:20px;color:#ccccdc;letter-spacing:-0.16px;-webkit-text-stroke:0.3px #ccccdc;">7 GiB</span><span class="t" style="left:1652.4px;top:624px;font-size:16.25px;line-height:20px;color:#ccccdc;letter-spacing:-0.04px;-webkit-text-stroke:0.3px #ccccdc;">6 GiB</span><span class="t" style="left:1652.6px;top:647px;font-size:16.25px;line-height:20px;color:#ccccdc;letter-spacing:-0.09px;-webkit-text-stroke:0.3px #ccccdc;">5 GiB</span><span class="t" style="left:1651.9px;top:670px;font-size:16.25px;line-height:20px;color:#ccccdc;letter-spacing:0.09px;-webkit-text-stroke:0.3px #ccccdc;">4 GiB</span><span class="t" style="left:1652.6px;top:694px;font-size:16.25px;line-height:20px;color:#ccccdc;letter-spacing:-0.09px;-webkit-text-stroke:0.3px #ccccdc;">3 GiB</span><span class="t" style="left:1652.6px;top:717px;font-size:16.25px;line-height:20px;color:#ccccdc;letter-spacing:-0.09px;-webkit-text-stroke:0.3px #ccccdc;">2 GiB</span><span class="t" style="left:1654.6px;top:741px;font-size:16.25px;line-height:20px;color:#ccccdc;letter-spacing:-0.59px;-webkit-text-stroke:0.3px #ccccdc;">1 GiB</span><span class="t" style="left:1668px;top:764px;font-size:16.25px;line-height:20px;color:#ccccdc;letter-spacing:0.25px;-webkit-text-stroke:0.3px #ccccdc;">0 B</span><div class="r" style="left:1651.7px;top:823.6px;width:19.4px;height:6.2px;background:#E0F9D7;border-radius:3.1px;"></div><span class="t" style="left:1681.7px;top:817px;font-size:16.75px;line-height:20px;color:#ccccdc;letter-spacing:0.26px;-webkit-text-stroke:0.3px #ccccdc;">RAM Total</span><div class="r" style="left:1774.9px;top:823.6px;width:19.4px;height:6.2px;background:#F2CC0C;border-radius:3.1px;"></div><span class="t" style="left:1804.9px;top:817px;font-size:16.75px;line-height:20px;color:#ccccdc;letter-spacing:0.15px;-webkit-text-stroke:0.3px #ccccdc;">RAM Used</span><div class="r" style="left:1901.1px;top:823.6px;width:19.4px;height:6.2px;background:#052B51;border-radius:3.1px;"></div><span class="t" style="left:1931.1px;top:817px;font-size:16.75px;line-height:20px;color:#ccccdc;letter-spacing:0.28px;-webkit-text-stroke:0.3px #ccccdc;">RAM Cache + Buffer</span><div class="r" style="left:2103.8px;top:823.6px;width:19.4px;height:6.2px;background:#7EB26D;border-radius:3.1px;"></div><span class="t" style="left:2133.8px;top:817px;font-size:16.75px;line-height:20px;color:#ccccdc;letter-spacing:-0.19px;-webkit-text-stroke:0.3px #ccccdc;">RAM Free</span><div class="r" style="left:2223px;top:823.6px;width:19.4px;height:6.2px;background:#d52c0b;border-radius:3.1px;"></div><span class="t" style="left:2253px;top:817px;font-size:16.75px;line-height:20px;color:#ccccdc;letter-spacing:0.04px;-webkit-text-stroke:0.3px #ccccdc;">SWAP Used</span><div class="r" style="left:427px;top:868px;width:1197px;height:348px;background:#181b1f;border:1px solid #2a2d33;border-radius:3px;"></div><span class="t" style="left:439.2px;top:878px;font-size:19.75px;line-height:24px;color:#ccccdc;letter-spacing:0.64px;-webkit-text-stroke:0.7px #ccccdc;">Network Traffic Basic</span><svg class="r" style="left:658.7px;top:880.2px;" width="21.4" height="21.4" viewBox="0 0 24 24"><g fill="none" stroke="#9a9ba8" stroke-width="1.9" stroke-linecap="round" stroke-linejoin="round"><circle cx="12" cy="12" r="9.3"/><path d="M12 11v5.2"/><path d="M12 7.4v.8"/></g></svg><svg class="r" style="left:427px;top:868px;" width="1197" height="348" viewBox="427 868 1197 348"><path d="M569.5 934.3L569.5 1139.1" stroke="rgba(240,250,255,0.09)" stroke-width="1" fill="none"/><path d="M659.5 934.3L659.5 1139.1" stroke="rgba(240,250,255,0.09)" stroke-width="1" fill="none"/><path d="M749.5 934.3L749.5 1139.1" stroke="rgba(240,250,255,0.09)" stroke-width="1" fill="none"/><path d="M840.5 934.3L840.5 1139.1" stroke="rgba(240,250,255,0.09)" stroke-width="1" fill="none"/><path d="M930.5 934.3L930.5 1139.1" stroke="rgba(240,250,255,0.09)" stroke-width="1" fill="none"/><path d="M1020.5 934.3L1020.5 1139.1" stroke="rgba(240,250,255,0.09)" stroke-width="1" fill="none"/><path d="M1111.5 934.3L1111.5 1139.1" stroke="rgba(240,250,255,0.09)" stroke-width="1" fill="none"/><path d="M1201.5 934.3L1201.5 1139.1" stroke="rgba(240,250,255,0.09)" stroke-width="1" fill="none"/><path d="M1291.5 934.3L1291.5 1139.1" stroke="rgba(240,250,255,0.09)" stroke-width="1" fill="none"/><path d="M1382.5 934.3L1382.5 1139.1" stroke="rgba(240,250,255,0.09)" stroke-width="1" fill="none"/><path d="M1472.5 934.3L1472.5 1139.1" stroke="rgba(240,250,255,0.09)" stroke-width="1" fill="none"/><path d="M1562.5 934.3L1562.5 1139.1" stroke="rgba(240,250,255,0.09)" stroke-width="1" fill="none"/><path d="M515.1 937.5L1599.1 937.5" stroke="rgba(240,250,255,0.09)" stroke-width="1" fill="none"/><path d="M515.1 966.5L1599.1 966.5" stroke="rgba(240,250,255,0.09)" stroke-width="1" fill="none"/><path d="M515.1 996.5L1599.1 996.5" stroke="rgba(240,250,255,0.09)" stroke-width="1" fill="none"/><path d="M515.1 1026.5L1599.1 1026.5" stroke="rgba(240,250,255,0.09)" stroke-width="1" fill="none"/><path d="M515.1 1056.5L1599.1 1056.5" stroke="rgba(240,250,255,0.09)" stroke-width="1" fill="none"/><path d="M515.1 1086.5L1599.1 1086.5" stroke="rgba(240,250,255,0.09)" stroke-width="1" fill="none"/><path d="M515.1 1116.5L1599.1 1116.5" stroke="rgba(240,250,255,0.09)" stroke-width="1" fill="none"/><path d="M1499.6 1116.6L1502 952L1503.2 952L1505.2 1116.6Z" fill="#F2CC0C" fill-opacity="0.35"/><path d="M1499.6 1116.6L1502 952L1503.2 952L1505.2 1116.6" fill="none" stroke="#e6c20f" stroke-width="1.5" stroke-linejoin="round"/><path d="M1508.6 1116.4L1510.6 1114.8L1512.6 1116.4" fill="none" stroke="#e6c20f" stroke-width="1.2" stroke-linejoin="round"/><path d="M515.1 1116.6L1599.1 1116.6" stroke="#8b97d0" stroke-width="1.7" fill="none"/></svg><span class="t" style="left:548.2px;top:1143px;font-size:16.25px;line-height:20px;color:#ccccdc;letter-spacing:0.33px;-webkit-text-stroke:0.3px #ccccdc;">16:00</span><span class="t" style="left:638.53px;top:1143px;font-size:16.25px;line-height:20px;color:#ccccdc;letter-spacing:0.33px;-webkit-text-stroke:0.3px #ccccdc;">18:00</span><span class="t" style="left:727.12px;top:1143px;font-size:16.25px;line-height:20px;color:#ccccdc;letter-spacing:1.21px;-webkit-text-stroke:0.3px #ccccdc;">20:00</span><span class="t" style="left:817.45px;top:1143px;font-size:16.25px;line-height:20px;color:#ccccdc;letter-spacing:1.21px;-webkit-text-stroke:0.3px #ccccdc;">22:00</span><span class="t" style="left:907.78px;top:1143px;font-size:16.25px;line-height:20px;color:#ccccdc;letter-spacing:1.21px;-webkit-text-stroke:0.3px #ccccdc;">00:00</span><span class="t" style="left:998.12px;top:1143px;font-size:16.25px;line-height:20px;color:#ccccdc;letter-spacing:1.21px;-webkit-text-stroke:0.3px #ccccdc;">02:00</span><span class="t" style="left:1088.45px;top:1143px;font-size:16.25px;line-height:20px;color:#ccccdc;letter-spacing:1.21px;-webkit-text-stroke:0.3px #ccccdc;">04:00</span><span class="t" style="left:1178.78px;top:1143px;font-size:16.25px;line-height:20px;color:#ccccdc;letter-spacing:1.21px;-webkit-text-stroke:0.3px #ccccdc;">06:00</span><span class="t" style="left:1269.12px;top:1143px;font-size:16.25px;line-height:20px;color:#ccccdc;letter-spacing:1.21px;-webkit-text-stroke:0.3px #ccccdc;">08:00</span><span class="t" style="left:1361.2px;top:1143px;font-size:16.25px;line-height:20px;color:#ccccdc;letter-spacing:0.33px;-webkit-text-stroke:0.3px #ccccdc;">10:00</span><span class="t" style="left:1451.53px;top:1143px;font-size:16.25px;line-height:20px;color:#ccccdc;letter-spacing:0.33px;-webkit-text-stroke:0.3px #ccccdc;">12:00</span><span class="t" style="left:1541.87px;top:1143px;font-size:16.25px;line-height:20px;color:#ccccdc;letter-spacing:0.33px;-webkit-text-stroke:0.3px #ccccdc;">14:00</span><span class="t" style="left:442.8px;top:926px;font-size:16.25px;line-height:20px;color:#ccccdc;letter-spacing:1.18px;-webkit-text-stroke:0.3px #ccccdc;">60 Mb/s</span><span class="t" style="left:443.2px;top:955px;font-size:16.25px;line-height:20px;color:#ccccdc;letter-spacing:1.12px;-webkit-text-stroke:0.3px #ccccdc;">50 Mb/s</span><span class="t" style="left:442.5px;top:985px;font-size:16.25px;line-height:20px;color:#ccccdc;letter-spacing:1.23px;-webkit-text-stroke:0.3px #ccccdc;">40 Mb/s</span><span class="t" style="left:443.2px;top:1015px;font-size:16.25px;line-height:20px;color:#ccccdc;letter-spacing:1.12px;-webkit-text-stroke:0.3px #ccccdc;">30 Mb/s</span><span class="t" style="left:443.2px;top:1045px;font-size:16.25px;line-height:20px;color:#ccccdc;letter-spacing:1.12px;-webkit-text-stroke:0.3px #ccccdc;">20 Mb/s</span><span class="t" style="left:446.6px;top:1075px;font-size:16.25px;line-height:20px;color:#ccccdc;letter-spacing:0.55px;-webkit-text-stroke:0.3px #ccccdc;">10 Mb/s</span><span class="t" style="left:468px;top:1105px;font-size:16.25px;line-height:20px;color:#ccccdc;letter-spacing:1.12px;-webkit-text-stroke:0.3px #ccccdc;">0 b/s</span><div class="r" style="left:443.7px;top:1182.6px;width:19.4px;height:6.2px;background:#73BF69;border-radius:3.1px;"></div><span class="t" style="left:473.7px;top:1176px;font-size:16.75px;line-height:20px;color:#ccccdc;letter-spacing:0.61px;-webkit-text-stroke:0.3px #ccccdc;">recv docker0</span><div class="r" style="left:590.5px;top:1182.6px;width:19.4px;height:6.2px;background:#F2CC0C;border-radius:3.1px;"></div><span class="t" style="left:620.5px;top:1176px;font-size:16.75px;line-height:20px;color:#ccccdc;letter-spacing:0.56px;-webkit-text-stroke:0.3px #ccccdc;">recv eth0</span><div class="r" style="left:708.1px;top:1182.6px;width:19.4px;height:6.2px;background:#8AB8FF;border-radius:3.1px;"></div><span class="t" style="left:738.1px;top:1176px;font-size:16.75px;line-height:20px;color:#ccccdc;letter-spacing:0.49px;-webkit-text-stroke:0.3px #ccccdc;">recv lo</span><div class="r" style="left:804.6px;top:1182.6px;width:19.4px;height:6.2px;background:#FF780A;border-radius:3.1px;"></div><span class="t" style="left:834.6px;top:1176px;font-size:16.75px;line-height:20px;color:#ccccdc;letter-spacing:0.49px;-webkit-text-stroke:0.3px #ccccdc;">trans docker0</span><div class="r" style="left:956.2px;top:1182.6px;width:19.4px;height:6.2px;background:#F2495C;border-radius:3.1px;"></div><span class="t" style="left:986.2px;top:1176px;font-size:16.75px;line-height:20px;color:#ccccdc;letter-spacing:0.46px;-webkit-text-stroke:0.3px #ccccdc;">trans eth0</span><div class="r" style="left:1079px;top:1182.6px;width:19.4px;height:6.2px;background:#5794F2;border-radius:3.1px;"></div><span class="t" style="left:1109px;top:1176px;font-size:16.75px;line-height:20px;color:#ccccdc;letter-spacing:0.44px;-webkit-text-stroke:0.3px #ccccdc;">trans lo</span><div class="r" style="left:1635px;top:868px;width:1197px;height:348px;background:#181b1f;border:1px solid #2a2d33;border-radius:3px;"></div><span class="t" style="left:1647.2px;top:878px;font-size:19.75px;line-height:24px;color:#ccccdc;letter-spacing:0.26px;-webkit-text-stroke:0.7px #ccccdc;">Disk Space Used Basic</span><svg class="r" style="left:1879.2px;top:880.2px;" width="21.4" height="21.4" viewBox="0 0 24 24"><g fill="none" stroke="#9a9ba8" stroke-width="1.9" stroke-linecap="round" stroke-linejoin="round"><circle cx="12" cy="12" r="9.3"/><path d="M12 11v5.2"/><path d="M12 7.4v.8"/></g></svg><svg class="r" style="left:1635px;top:868px;" width="1197" height="348" viewBox="1635 868 1197 348"><path d="M1756.5 934.3L1756.5 1139.3" stroke="rgba(240,250,255,0.09)" stroke-width="1" fill="none"/><path d="M1848.5 934.3L1848.5 1139.3" stroke="rgba(240,250,255,0.09)" stroke-width="1" fill="none"/><path d="M1940.5 934.3L1940.5 1139.3" stroke="rgba(240,250,255,0.09)" stroke-width="1" fill="none"/><path d="M2032.5 934.3L2032.5 1139.3" stroke="rgba(240,250,255,0.09)" stroke-width="1" fill="none"/><path d="M2124.5 934.3L2124.5 1139.3" stroke="rgba(240,250,255,0.09)" stroke-width="1" fill="none"/><path d="M2216.5 934.3L2216.5 1139.3" stroke="rgba(240,250,255,0.09)" stroke-width="1" fill="none"/><path d="M2308.5 934.3L2308.5 1139.3" stroke="rgba(240,250,255,0.09)" stroke-width="1" fill="none"/><path d="M2401.5 934.3L2401.5 1139.3" stroke="rgba(240,250,255,0.09)" stroke-width="1" fill="none"/><path d="M2493.5 934.3L2493.5 1139.3" stroke="rgba(240,250,255,0.09)" stroke-width="1" fill="none"/><path d="M2585.5 934.3L2585.5 1139.3" stroke="rgba(240,250,255,0.09)" stroke-width="1" fill="none"/><path d="M2677.5 934.3L2677.5 1139.3" stroke="rgba(240,250,255,0.09)" stroke-width="1" fill="none"/><path d="M2769.5 934.3L2769.5 1139.3" stroke="rgba(240,250,255,0.09)" stroke-width="1" fill="none"/><path d="M1702 934.5L2807.1 934.5" stroke="rgba(240,250,255,0.09)" stroke-width="1" fill="none"/><path d="M1702 974.5L2807.1 974.5" stroke="rgba(240,250,255,0.09)" stroke-width="1" fill="none"/><path d="M1702 1014.5L2807.1 1014.5" stroke="rgba(240,250,255,0.09)" stroke-width="1" fill="none"/><path d="M1702 1054.5L2807.1 1054.5" stroke="rgba(240,250,255,0.09)" stroke-width="1" fill="none"/><path d="M1702 1094.5L2807.1 1094.5" stroke="rgba(240,250,255,0.09)" stroke-width="1" fill="none"/><path d="M1702 1134.5L2807.1 1134.5" stroke="rgba(240,250,255,0.09)" stroke-width="1" fill="none"/><path d="M1702 1097.2L2807.1 1097.2L2807.1 1134.3L1702 1134.3Z" fill="#73BF69" fill-opacity="0.4"/><path d="M1702 1110.8L1706 1110.8L1709 1106.6L1713 1106.6L1715 1107.6L2707 1107.6L2711 1103.6L2807.1 1103.6L2807.1 1134.3L1702 1134.3Z" fill="#F2CC0C" fill-opacity="0.4"/><path d="M1702 1097.2L2807.1 1097.2" fill="none" stroke="#73BF69" stroke-width="1.4" stroke-linejoin="round"/><path d="M1702 1110.8L1706 1110.8L1709 1106.6L1713 1106.6L1715 1107.6L2707 1107.6L2711 1103.6L2807.1 1103.6" fill="none" stroke="#dcc12a" stroke-width="1.4" stroke-linejoin="round"/><path d="M1702 1133.4L2807.1 1133.4" stroke="#e8842c" stroke-width="1.3" fill="none"/><path d="M1702 1134.6L2807.1 1134.6" stroke="#e2404f" stroke-width="1.5" fill="none"/></svg><span class="t" style="left:1735.4px;top:1143px;font-size:16.25px;line-height:20px;color:#ccccdc;letter-spacing:0.33px;-webkit-text-stroke:0.3px #ccccdc;">16:00</span><span class="t" style="left:1827.49px;top:1143px;font-size:16.25px;line-height:20px;color:#ccccdc;letter-spacing:0.33px;-webkit-text-stroke:0.3px #ccccdc;">18:00</span><span class="t" style="left:1917.83px;top:1143px;font-size:16.25px;line-height:20px;color:#ccccdc;letter-spacing:1.21px;-webkit-text-stroke:0.3px #ccccdc;">20:00</span><span class="t" style="left:2009.93px;top:1143px;font-size:16.25px;line-height:20px;color:#ccccdc;letter-spacing:1.21px;-webkit-text-stroke:0.3px #ccccdc;">22:00</span><span class="t" style="left:2102.02px;top:1143px;font-size:16.25px;line-height:20px;color:#ccccdc;letter-spacing:1.21px;-webkit-text-stroke:0.3px #ccccdc;">00:00</span><span class="t" style="left:2194.11px;top:1143px;font-size:16.25px;line-height:20px;color:#ccccdc;letter-spacing:1.21px;-webkit-text-stroke:0.3px #ccccdc;">02:00</span><span class="t" style="left:2286.2px;top:1143px;font-size:16.25px;line-height:20px;color:#ccccdc;letter-spacing:1.21px;-webkit-text-stroke:0.3px #ccccdc;">04:00</span><span class="t" style="left:2378.29px;top:1143px;font-size:16.25px;line-height:20px;color:#ccccdc;letter-spacing:1.21px;-webkit-text-stroke:0.3px #ccccdc;">06:00</span><span class="t" style="left:2470.38px;top:1143px;font-size:16.25px;line-height:20px;color:#ccccdc;letter-spacing:1.21px;-webkit-text-stroke:0.3px #ccccdc;">08:00</span><span class="t" style="left:2564.22px;top:1143px;font-size:16.25px;line-height:20px;color:#ccccdc;letter-spacing:0.33px;-webkit-text-stroke:0.3px #ccccdc;">10:00</span><span class="t" style="left:2656.32px;top:1143px;font-size:16.25px;line-height:20px;color:#ccccdc;letter-spacing:0.33px;-webkit-text-stroke:0.3px #ccccdc;">12:00</span><span class="t" style="left:2748.41px;top:1143px;font-size:16.25px;line-height:20px;color:#ccccdc;letter-spacing:0.33px;-webkit-text-stroke:0.3px #ccccdc;">14:00</span><span class="t" style="left:1651.3px;top:923px;font-size:16.25px;line-height:20px;color:#ccccdc;letter-spacing:0.01px;-webkit-text-stroke:0.3px #ccccdc;">100%</span><span class="t" style="left:1658.4px;top:963px;font-size:16.25px;line-height:20px;color:#ccccdc;letter-spacing:0.99px;-webkit-text-stroke:0.3px #ccccdc;">80%</span><span class="t" style="left:1658.4px;top:1003px;font-size:16.25px;line-height:20px;color:#ccccdc;letter-spacing:0.99px;-webkit-text-stroke:0.3px #ccccdc;">60%</span><span class="t" style="left:1658.4px;top:1043px;font-size:16.25px;line-height:20px;color:#ccccdc;letter-spacing:0.99px;-webkit-text-stroke:0.3px #ccccdc;">40%</span><span class="t" style="left:1658.9px;top:1083px;font-size:16.25px;line-height:20px;color:#ccccdc;letter-spacing:0.74px;-webkit-text-stroke:0.3px #ccccdc;">20%</span><span class="t" style="left:1668.3px;top:1123px;font-size:16.25px;line-height:20px;color:#ccccdc;letter-spacing:1.11px;-webkit-text-stroke:0.3px #ccccdc;">0%</span><div class="r" style="left:1651.7px;top:1182.6px;width:19.4px;height:6.2px;background:#73BF69;border-radius:3.1px;"></div><span class="t" style="left:1681.7px;top:1176px;font-size:16.75px;line-height:20px;color:#ccccdc;letter-spacing:0.91px;-webkit-text-stroke:0.3px #ccccdc;">/boot</span><div class="r" style="left:1736.8px;top:1182.6px;width:19.4px;height:6.2px;background:#F2CC0C;border-radius:3.1px;"></div><span class="t" style="left:1766.8px;top:1176px;font-size:16.75px;line-height:20px;color:#ccccdc;-webkit-text-stroke:0.3px #ccccdc;">/</span><div class="r" style="left:1786.2px;top:1182.6px;width:19.4px;height:6.2px;background:#8AB8FF;border-radius:3.1px;"></div><span class="t" style="left:1816.2px;top:1176px;font-size:16.75px;line-height:20px;color:#ccccdc;letter-spacing:0.77px;-webkit-text-stroke:0.3px #ccccdc;">/xvdb</span><div class="r" style="left:1873.5px;top:1182.6px;width:19.4px;height:6.2px;background:#FF780A;border-radius:3.1px;"></div><span class="t" style="left:1903.5px;top:1176px;font-size:16.75px;line-height:20px;color:#ccccdc;letter-spacing:0.75px;-webkit-text-stroke:0.3px #ccccdc;">/run</span><div class="r" style="left:1948.8px;top:1182.6px;width:19.4px;height:6.2px;background:#F2495C;border-radius:3.1px;"></div><span class="t" style="left:1978.8px;top:1176px;font-size:16.75px;line-height:20px;color:#ccccdc;letter-spacing:0.7px;-webkit-text-stroke:0.3px #ccccdc;">/run/user/0</span><div class="r" style="left:427px;top:1278px;width:1197px;height:605px;background:#181b1f;border:1px solid #2a2d33;border-radius:3px;"></div><span class="t" style="left:439.2px;top:1288px;font-size:19.75px;line-height:24px;color:#ccccdc;letter-spacing:-0.95px;-webkit-text-stroke:0.7px #ccccdc;">CPU</span><svg class="r" style="left:427px;top:1278px;" width="1197" height="605" viewBox="427 1278 1197 605"><path d="M584.5 1344.5L584.5 1658.3" stroke="rgba(240,250,255,0.09)" stroke-width="1" fill="none"/><path d="M673.5 1344.5L673.5 1658.3" stroke="rgba(240,250,255,0.09)" stroke-width="1" fill="none"/><path d="M762.5 1344.5L762.5 1658.3" stroke="rgba(240,250,255,0.09)" stroke-width="1" fill="none"/><path d="M851.5 1344.5L851.5 1658.3" stroke="rgba(240,250,255,0.09)" stroke-width="1" fill="none"/><path d="M940.5 1344.5L940.5 1658.3" stroke="rgba(240,250,255,0.09)" stroke-width="1" fill="none"/><path d="M1029.5 1344.5L1029.5 1658.3" stroke="rgba(240,250,255,0.09)" stroke-width="1" fill="none"/><path d="M1118.5 1344.5L1118.5 1658.3" stroke="rgba(240,250,255,0.09)" stroke-width="1" fill="none"/><path d="M1207.5 1344.5L1207.5 1658.3" stroke="rgba(240,250,255,0.09)" stroke-width="1" fill="none"/><path d="M1296.5 1344.5L1296.5 1658.3" stroke="rgba(240,250,255,0.09)" stroke-width="1" fill="none"/><path d="M1385.5 1344.5L1385.5 1658.3" stroke="rgba(240,250,255,0.09)" stroke-width="1" fill="none"/><path d="M1474.5 1344.5L1474.5 1658.3" stroke="rgba(240,250,255,0.09)" stroke-width="1" fill="none"/><path d="M1563.5 1344.5L1563.5 1658.3" stroke="rgba(240,250,255,0.09)" stroke-width="1" fill="none"/><path d="M530.1 1344.5L1598.6 1344.5" stroke="rgba(240,250,255,0.09)" stroke-width="1" fill="none"/><path d="M530.1 1406.5L1598.6 1406.5" stroke="rgba(240,250,255,0.09)" stroke-width="1" fill="none"/><path d="M530.1 1468.5L1598.6 1468.5" stroke="rgba(240,250,255,0.09)" stroke-width="1" fill="none"/><path d="M530.1 1529.5L1598.6 1529.5" stroke="rgba(240,250,255,0.09)" stroke-width="1" fill="none"/><path d="M530.1 1591.5L1598.6 1591.5" stroke="rgba(240,250,255,0.09)" stroke-width="1" fill="none"/><path d="M530.1 1653.5L1598.6 1653.5" stroke="rgba(240,250,255,0.09)" stroke-width="1" fill="none"/><path d="M530.1 1343.3L1598.6 1343.3L1598.6 1653.3L530.1 1653.3Z" fill="#052B51" fill-opacity="0.7"/><path d="M530.1 1344.2L1598.6 1344.2" stroke="#0a3560" stroke-width="1.8" fill="none"/><path d="M530.1 1652.2L656.4 1652.2L658 1650L659.6 1652.2L834.4 1652.2L836 1649.8L837.6 1652.2L1011.4 1652.2L1013 1650L1014.6 1652.2L1366.4 1652.2L1368 1650.4L1369.6 1652.2L1500.4 1652.2L1502 1644.7L1503.6 1652.2L1508.4 1652.2L1510 1646.2L1511.6 1652.2L1554.4 1652.2L1556 1646.7L1557.6 1652.2L1559.4 1652.2L1561 1649.7L1562.6 1652.2L1598.6 1652.2" fill="none" stroke="#e9dfe2" stroke-width="1.2" stroke-linejoin="round"/><path d="M530.1 1653.2L1598.6 1653.2" stroke="#f1b3a0" stroke-width="2.2" fill="none"/><path d="M530.1 1654.9L1598.6 1654.9" stroke="#a84a32" stroke-width="1.2" fill="none"/></svg><span class="t" style="left:563.3px;top:1662px;font-size:16.25px;line-height:20px;color:#ccccdc;letter-spacing:0.33px;-webkit-text-stroke:0.3px #ccccdc;">16:00</span><span class="t" style="left:652.34px;top:1662px;font-size:16.25px;line-height:20px;color:#ccccdc;letter-spacing:0.33px;-webkit-text-stroke:0.3px #ccccdc;">18:00</span><span class="t" style="left:739.63px;top:1662px;font-size:16.25px;line-height:20px;color:#ccccdc;letter-spacing:1.21px;-webkit-text-stroke:0.3px #ccccdc;">20:00</span><span class="t" style="left:828.67px;top:1662px;font-size:16.25px;line-height:20px;color:#ccccdc;letter-spacing:1.21px;-webkit-text-stroke:0.3px #ccccdc;">22:00</span><span class="t" style="left:917.72px;top:1662px;font-size:16.25px;line-height:20px;color:#ccccdc;letter-spacing:1.21px;-webkit-text-stroke:0.3px #ccccdc;">00:00</span><span class="t" style="left:1006.76px;top:1662px;font-size:16.25px;line-height:20px;color:#ccccdc;letter-spacing:1.21px;-webkit-text-stroke:0.3px #ccccdc;">02:00</span><span class="t" style="left:1095.8px;top:1662px;font-size:16.25px;line-height:20px;color:#ccccdc;letter-spacing:1.21px;-webkit-text-stroke:0.3px #ccccdc;">04:00</span><span class="t" style="left:1184.84px;top:1662px;font-size:16.25px;line-height:20px;color:#ccccdc;letter-spacing:1.21px;-webkit-text-stroke:0.3px #ccccdc;">06:00</span><span class="t" style="left:1273.88px;top:1662px;font-size:16.25px;line-height:20px;color:#ccccdc;letter-spacing:1.21px;-webkit-text-stroke:0.3px #ccccdc;">08:00</span><span class="t" style="left:1364.67px;top:1662px;font-size:16.25px;line-height:20px;color:#ccccdc;letter-spacing:0.33px;-webkit-text-stroke:0.3px #ccccdc;">10:00</span><span class="t" style="left:1453.72px;top:1662px;font-size:16.25px;line-height:20px;color:#ccccdc;letter-spacing:0.33px;-webkit-text-stroke:0.3px #ccccdc;">12:00</span><span class="t" style="left:1542.76px;top:1662px;font-size:16.25px;line-height:20px;color:#ccccdc;letter-spacing:0.33px;-webkit-text-stroke:0.3px #ccccdc;">14:00</span><span class="t" style="left:480.9px;top:1333px;font-size:16.25px;line-height:20px;color:#ccccdc;letter-spacing:0.01px;-webkit-text-stroke:0.3px #ccccdc;">100%</span><span class="t" style="left:488px;top:1395px;font-size:16.25px;line-height:20px;color:#ccccdc;letter-spacing:0.99px;-webkit-text-stroke:0.3px #ccccdc;">80%</span><span class="t" style="left:488px;top:1457px;font-size:16.25px;line-height:20px;color:#ccccdc;letter-spacing:0.99px;-webkit-text-stroke:0.3px #ccccdc;">60%</span><span class="t" style="left:488px;top:1518px;font-size:16.25px;line-height:20px;color:#ccccdc;letter-spacing:0.99px;-webkit-text-stroke:0.3px #ccccdc;">40%</span><span class="t" style="left:488.5px;top:1580px;font-size:16.25px;line-height:20px;color:#ccccdc;letter-spacing:0.74px;-webkit-text-stroke:0.3px #ccccdc;">20%</span><span class="t" style="left:497.9px;top:1642px;font-size:16.25px;line-height:20px;color:#ccccdc;letter-spacing:1.11px;-webkit-text-stroke:0.3px #ccccdc;">0%</span><span class="t" style="left:451.5px;top:1499.1px;transform-origin:0 0;transform:rotate(-90deg) translate(-43.5px,-15px);font-size:16.75px;line-height:20px;color:#ccccdc;letter-spacing:0.35px;-webkit-text-stroke:0.3px #ccccdc;">percentage</span><span class="t" style="left:479.7px;top:1687px;font-size:16.75px;line-height:20px;color:#6e9fff;letter-spacing:0.11px;-webkit-text-stroke:0.7px #6e9fff;">Name</span><span class="t" style="left:1276px;top:1687px;font-size:16.75px;line-height:20px;color:#6e9fff;letter-spacing:0.7px;-webkit-text-stroke:0.7px #6e9fff;">Mean</span><span class="t" style="left:1369.6px;top:1687px;font-size:16.75px;line-height:20px;color:#6e9fff;letter-spacing:1.03px;-webkit-text-stroke:0.7px #6e9fff;">Last *</span><span class="t" style="left:1475.4px;top:1687px;font-size:16.75px;line-height:20px;color:#6e9fff;letter-spacing:0.18px;-webkit-text-stroke:0.7px #6e9fff;">Max</span><span class="t" style="left:1561.6px;top:1687px;font-size:16.75px;line-height:20px;color:#6e9fff;letter-spacing:0.5px;-webkit-text-stroke:0.7px #6e9fff;">Min</span><div class="r" style="left:1635px;top:1278px;width:1197px;height:605px;background:#181b1f;border:1px solid #2a2d33;border-radius:3px;"></div><span class="t" style="left:1647.2px;top:1288px;font-size:19.75px;line-height:24px;color:#ccccdc;letter-spacing:0.66px;-webkit-text-stroke:0.7px #ccccdc;">Memory Stack</span><svg class="r" style="left:1635px;top:1278px;" width="1197" height="605" viewBox="1635 1278 1197 605"><path d="M1791.5 1344.3L1791.5 1658.8" stroke="rgba(240,250,255,0.09)" stroke-width="1" fill="none"/><path d="M1880.5 1344.3L1880.5 1658.8" stroke="rgba(240,250,255,0.09)" stroke-width="1" fill="none"/><path d="M1969.5 1344.3L1969.5 1658.8" stroke="rgba(240,250,255,0.09)" stroke-width="1" fill="none"/><path d="M2058.5 1344.3L2058.5 1658.8" stroke="rgba(240,250,255,0.09)" stroke-width="1" fill="none"/><path d="M2147.5 1344.3L2147.5 1658.8" stroke="rgba(240,250,255,0.09)" stroke-width="1" fill="none"/><path d="M2236.5 1344.3L2236.5 1658.8" stroke="rgba(240,250,255,0.09)" stroke-width="1" fill="none"/><path d="M2325.5 1344.3L2325.5 1658.8" stroke="rgba(240,250,255,0.09)" stroke-width="1" fill="none"/><path d="M2415.5 1344.3L2415.5 1658.8" stroke="rgba(240,250,255,0.09)" stroke-width="1" fill="none"/><path d="M2504.5 1344.3L2504.5 1658.8" stroke="rgba(240,250,255,0.09)" stroke-width="1" fill="none"/><path d="M2593.5 1344.3L2593.5 1658.8" stroke="rgba(240,250,255,0.09)" stroke-width="1" fill="none"/><path d="M2682.5 1344.3L2682.5 1658.8" stroke="rgba(240,250,255,0.09)" stroke-width="1" fill="none"/><path d="M2771.5 1344.3L2771.5 1658.8" stroke="rgba(240,250,255,0.09)" stroke-width="1" fill="none"/><path d="M1738.3 1364.5L2807.2 1364.5" stroke="rgba(240,250,255,0.09)" stroke-width="1" fill="none"/><path d="M1738.3 1436.5L2807.2 1436.5" stroke="rgba(240,250,255,0.09)" stroke-width="1" fill="none"/><path d="M1738.3 1509.5L2807.2 1509.5" stroke="rgba(240,250,255,0.09)" stroke-width="1" fill="none"/><path d="M1738.3 1581.5L2807.2 1581.5" stroke="rgba(240,250,255,0.09)" stroke-width="1" fill="none"/><path d="M1738.3 1653.5L2807.2 1653.5" stroke="rgba(240,250,255,0.09)" stroke-width="1" fill="none"/><path d="M1738.3 1375.1L2807.2 1375.1L2807.2 1551L2778 1551.2L2772 1550.6L2764.5 1551.8L2762 1555.2L2719 1555.2L2716 1556.5L2711.5 1561L2709 1584.2L2242 1584.2L2238 1583.4L2235 1585L1886 1585L1883 1584L1881 1585.2L1773.3 1585.2L1771.3 1586L1750.8 1586L1749.3 1580.7L1744.3 1580.7L1742.7 1605L1738.3 1605Z" fill="#052B51" fill-opacity="0.4"/><path d="M1738.3 1605L1742.7 1605L1744.3 1580.7L1749.3 1580.7L1750.8 1586L1771.3 1586L1773.3 1585.2L1881 1585.2L1883 1584L1886 1585L2235 1585L2238 1583.4L2242 1584.2L2709 1584.2L2711.5 1561L2716 1556.5L2719 1555.2L2762 1555.2L2764.5 1551.8L2772 1550.6L2778 1551.2L2807.2 1551L2807.2 1633.4L2798 1634.6L2792 1633.6L2786 1634.4L2778 1635L2773 1633L2768 1633.8L2762 1636L2756 1638.4L2718 1638.6L2714 1637.4L2709 1640.4L2243 1640.4L2239 1639.2L2236 1640.8L1905 1640.8L1902 1639.4L1879 1639.4L1876 1640.8L1851.3 1640.8L1848.3 1639.6L1774.3 1639.6L1771.3 1640.7L1744.8 1640.7L1742.8 1641.5L1738.3 1641.5Z" fill="#F2495C" fill-opacity="0.4"/><path d="M1738.3 1641.5L1742.8 1641.5L1744.8 1640.7L1771.3 1640.7L1774.3 1639.6L1848.3 1639.6L1851.3 1640.8L1876 1640.8L1879 1639.4L1902 1639.4L1905 1640.8L2236 1640.8L2239 1639.2L2243 1640.4L2709 1640.4L2714 1637.4L2718 1638.6L2756 1638.4L2762 1636L2768 1633.8L2773 1633L2778 1635L2786 1634.4L2792 1633.6L2798 1634.6L2807.2 1633.4L2807.2 1641.4L2780 1642L2772 1641.2L2764 1642.4L2758 1644.6L2718 1644.8L2714 1643.6L2709 1645.8L1795 1645.8L1793 1644.6L1791 1645.8L1738.3 1645.8Z" fill="#FF780A" fill-opacity="0.55"/><path d="M1738.3 1645.8L1791 1645.8L1793 1644.6L1795 1645.8L2709 1645.8L2714 1643.6L2718 1644.8L2758 1644.6L2764 1642.4L2772 1641.2L2780 1642L2807.2 1641.4L2807.2 1653.8L1738.3 1653.8Z" fill="#73BF69" fill-opacity="0.4"/><path d="M1738.3 1375.1L2807.2 1375.1" fill="none" stroke="#6c66aa" stroke-width="2" stroke-linejoin="round"/><path d="M1738.3 1605L1742.7 1605L1744.3 1580.7L1749.3 1580.7L1750.8 1586L1771.3 1586L1773.3 1585.2L1881 1585.2L1883 1584L1886 1585L2235 1585L2238 1583.4L2242 1584.2L2709 1584.2L2711.5 1561L2716 1556.5L2719 1555.2L2762 1555.2L2764.5 1551.8L2772 1550.6L2778 1551.2L2807.2 1551" fill="none" stroke="#7b8fdc" stroke-width="1.5" stroke-linejoin="round"/><path d="M1738.3 1641.5L1742.8 1641.5L1744.8 1640.7L1771.3 1640.7L1774.3 1639.6L1848.3 1639.6L1851.3 1640.8L1876 1640.8L1879 1639.4L1902 1639.4L1905 1640.8L2236 1640.8L2239 1639.2L2243 1640.4L2709 1640.4L2714 1637.4L2718 1638.6L2756 1638.4L2762 1636L2768 1633.8L2773 1633L2778 1635L2786 1634.4L2792 1633.6L2798 1634.6L2807.2 1633.4" fill="none" stroke="#ea6a22" stroke-width="1.8" stroke-linejoin="round"/><path d="M1738.3 1645.8L1791 1645.8L1793 1644.6L1795 1645.8L2709 1645.8L2714 1643.6L2718 1644.8L2758 1644.6L2764 1642.4L2772 1641.2L2780 1642L2807.2 1641.4" fill="none" stroke="#c9b48e" stroke-width="1.4" stroke-linejoin="round"/><path d="M1738.3 1653.8L2807.2 1653.8" stroke="#bfebd7" stroke-width="1.7" fill="none"/></svg><span class="t" style="left:1770.5px;top:1662px;font-size:16.25px;line-height:20px;color:#ccccdc;letter-spacing:0.33px;-webkit-text-stroke:0.3px #ccccdc;">16:00</span><span class="t" style="left:1859.58px;top:1662px;font-size:16.25px;line-height:20px;color:#ccccdc;letter-spacing:0.33px;-webkit-text-stroke:0.3px #ccccdc;">18:00</span><span class="t" style="left:1946.9px;top:1662px;font-size:16.25px;line-height:20px;color:#ccccdc;letter-spacing:1.21px;-webkit-text-stroke:0.3px #ccccdc;">20:00</span><span class="t" style="left:2035.97px;top:1662px;font-size:16.25px;line-height:20px;color:#ccccdc;letter-spacing:1.21px;-webkit-text-stroke:0.3px #ccccdc;">22:00</span><span class="t" style="left:2125.05px;top:1662px;font-size:16.25px;line-height:20px;color:#ccccdc;letter-spacing:1.21px;-webkit-text-stroke:0.3px #ccccdc;">00:00</span><span class="t" style="left:2214.12px;top:1662px;font-size:16.25px;line-height:20px;color:#ccccdc;letter-spacing:1.21px;-webkit-text-stroke:0.3px #ccccdc;">02:00</span><span class="t" style="left:2303.2px;top:1662px;font-size:16.25px;line-height:20px;color:#ccccdc;letter-spacing:1.21px;-webkit-text-stroke:0.3px #ccccdc;">04:00</span><span class="t" style="left:2392.27px;top:1662px;font-size:16.25px;line-height:20px;color:#ccccdc;letter-spacing:1.21px;-webkit-text-stroke:0.3px #ccccdc;">06:00</span><span class="t" style="left:2481.35px;top:1662px;font-size:16.25px;line-height:20px;color:#ccccdc;letter-spacing:1.21px;-webkit-text-stroke:0.3px #ccccdc;">08:00</span><span class="t" style="left:2572.18px;top:1662px;font-size:16.25px;line-height:20px;color:#ccccdc;letter-spacing:0.33px;-webkit-text-stroke:0.3px #ccccdc;">10:00</span><span class="t" style="left:2661.25px;top:1662px;font-size:16.25px;line-height:20px;color:#ccccdc;letter-spacing:0.33px;-webkit-text-stroke:0.3px #ccccdc;">12:00</span><span class="t" style="left:2750.32px;top:1662px;font-size:16.25px;line-height:20px;color:#ccccdc;letter-spacing:0.33px;-webkit-text-stroke:0.3px #ccccdc;">14:00</span><span class="t" style="left:1689.9px;top:1353px;font-size:16.25px;line-height:20px;color:#ccccdc;letter-spacing:-0.04px;-webkit-text-stroke:0.3px #ccccdc;">8 GiB</span><span class="t" style="left:1689.9px;top:1425px;font-size:16.25px;line-height:20px;color:#ccccdc;letter-spacing:-0.04px;-webkit-text-stroke:0.3px #ccccdc;">6 GiB</span><span class="t" style="left:1689.4px;top:1498px;font-size:16.25px;line-height:20px;color:#ccccdc;letter-spacing:0.09px;-webkit-text-stroke:0.3px #ccccdc;">4 GiB</span><span class="t" style="left:1690.1px;top:1570px;font-size:16.25px;line-height:20px;color:#ccccdc;letter-spacing:-0.09px;-webkit-text-stroke:0.3px #ccccdc;">2 GiB</span><span class="t" style="left:1705.5px;top:1642px;font-size:16.25px;line-height:20px;color:#ccccdc;letter-spacing:0.25px;-webkit-text-stroke:0.3px #ccccdc;">0 B</span><span class="t" style="left:1658.9px;top:1499.1px;transform-origin:0 0;transform:rotate(-90deg) translate(-21.25px,-15px);font-size:16.75px;line-height:20px;color:#ccccdc;letter-spacing:0.62px;-webkit-text-stroke:0.3px #ccccdc;">bytes</span><span class="t" style="left:1687.8px;top:1687px;font-size:16.75px;line-height:20px;color:#6e9fff;letter-spacing:0.11px;-webkit-text-stroke:0.7px #6e9fff;">Name</span><span class="t" style="left:2548.5px;top:1687px;font-size:16.75px;line-height:20px;color:#6e9fff;letter-spacing:0.7px;-webkit-text-stroke:0.7px #6e9fff;">Mean</span><span class="t" style="left:2644.5px;top:1687px;font-size:16.75px;line-height:20px;color:#6e9fff;letter-spacing:1.03px;-webkit-text-stroke:0.7px #6e9fff;">Last *</span><span class="t" style="left:2743px;top:1687px;font-size:16.75px;line-height:20px;color:#6e9fff;letter-spacing:0.18px;-webkit-text-stroke:0.7px #6e9fff;">Max</span>
<div class="r" style="left:2855px;top:1px;width:25px;height:1692px;background:#424242;"></div><div class="r" style="left:2857px;top:26px;width:21px;height:630px;background:#686868;"></div><svg class="r" style="left:2855px;top:1px;" width="25" height="25" viewBox="0 0 25 25"><path d="M6.8 16.2 L12.6 9.8 L18.4 16.2Z" fill="#a3a3a3"/></svg><svg class="r" style="left:2855px;top:1668px;" width="25" height="25" viewBox="0 0 25 25"><path d="M6.8 10.8 L18.4 10.8 L12.6 17.2Z" fill="#ffffff"/></svg>
</div></body></html>
